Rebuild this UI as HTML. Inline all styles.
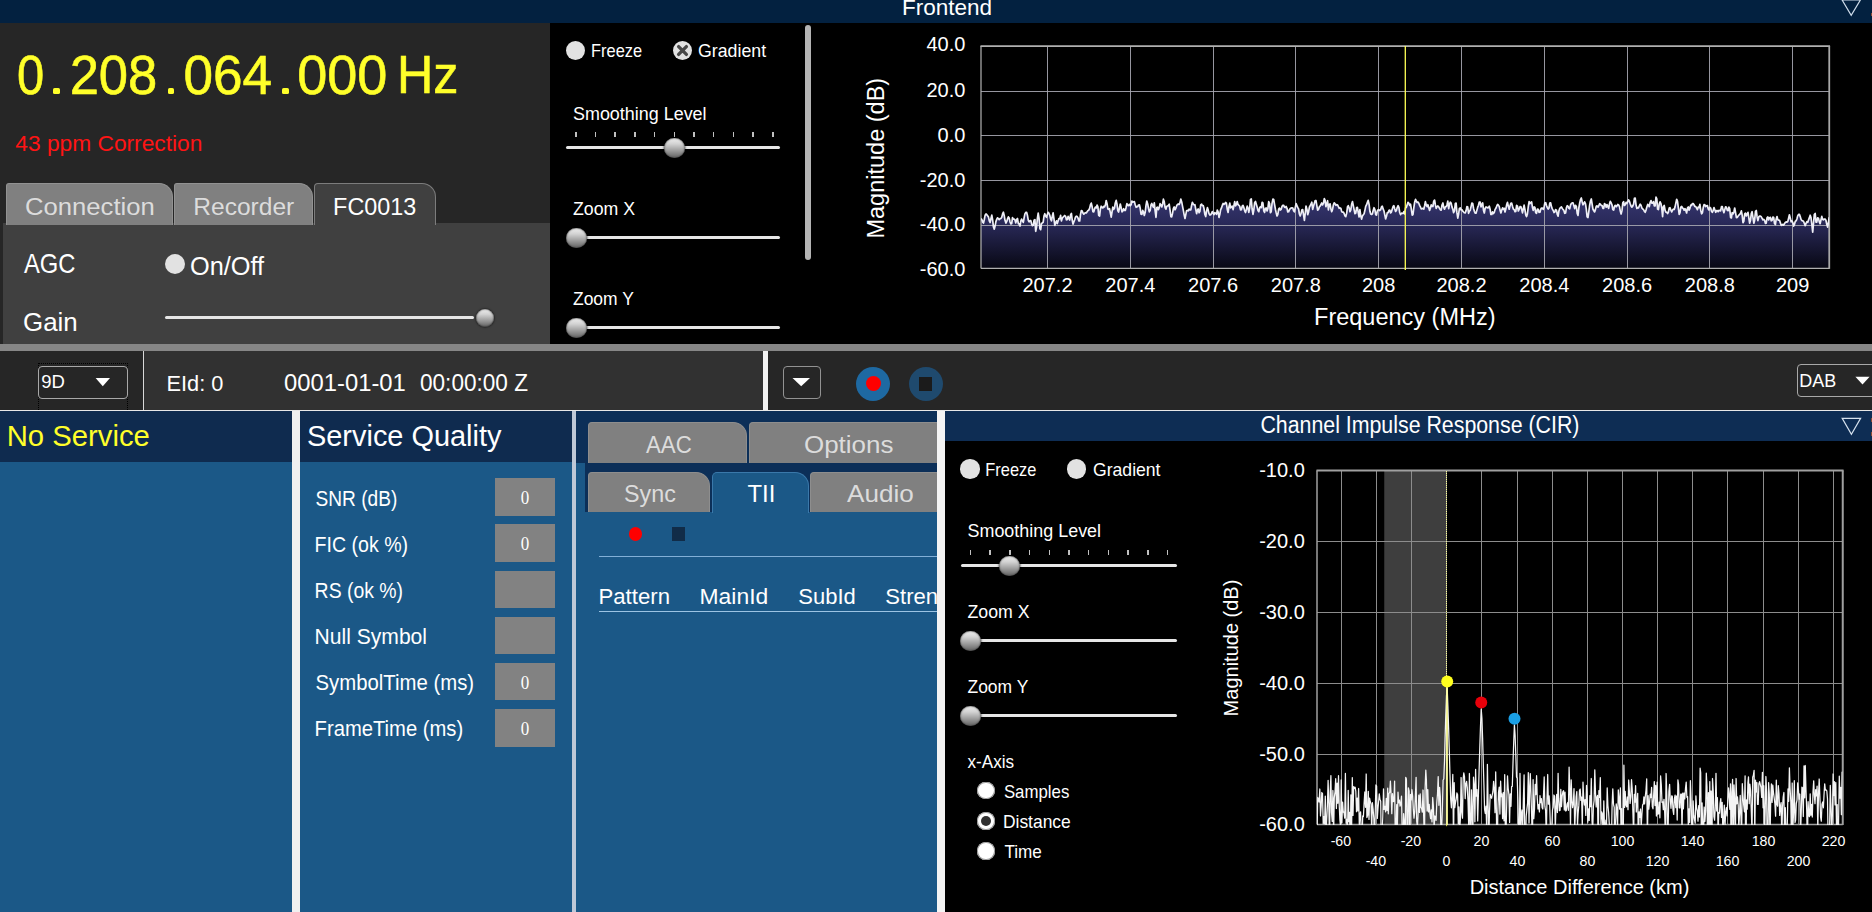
<!DOCTYPE html>
<html><head><meta charset="utf-8"><title>DAB</title>
<style>
html,body{margin:0;padding:0;background:#000;}
body{width:1872px;height:912px;position:relative;overflow:hidden;font-family:"Liberation Sans",sans-serif;}
.t{position:absolute;white-space:nowrap;line-height:1;transform-origin:0 0;font-family:"Liberation Sans",sans-serif;}
svg{display:block}
svg text{font-family:"Liberation Sans",sans-serif;fill:#fff}
</style></head><body>
<div style="position:absolute;left:0px;top:0px;width:1872px;height:23px;background:#032140;"></div>
<div style="position:absolute;left:0px;top:23px;width:550px;height:321px;background:#262626;"></div>
<div style="position:absolute;left:3px;top:222.5px;width:547px;height:121.5px;background:#404040;"></div>
<div style="position:absolute;left:6px;top:183px;width:166.5px;height:41.69999999999999px;background:#808080;border-radius:3px 14px 0 0;box-sizing:border-box;border:1px solid #929292;border-bottom:none"></div>
<div style="position:absolute;left:174px;top:183px;width:138.7px;height:41.69999999999999px;background:#808080;border-radius:3px 14px 0 0;box-sizing:border-box;border:1px solid #929292;border-bottom:none"></div>
<div style="position:absolute;left:314px;top:183px;width:121.5px;height:42px;background:#404040;border-radius:4px 14px 0 0;box-sizing:border-box;border:1px solid #7c7c7c;border-bottom:none"></div>
<div style="position:absolute;left:165.0px;top:254.0px;width:20px;height:20px;border-radius:50%;background:#e2e2e2;"></div>
<div style="position:absolute;left:165px;top:316.0px;width:309.2px;height:3px;background:#e6e6e6;border-radius:1.5px"></div>
<div style="position:absolute;left:475.6px;top:308.8px;width:18px;height:18px;border-radius:50%;background:linear-gradient(180deg,#f0f0f0 0%,#d2d2d2 30%,#929292 70%,#626262 100%);box-shadow:0 0 1.5px 1px rgba(0,0,0,0.35), inset 0 0 1.5px 0.5px rgba(40,40,40,0.7)"></div>
<div style="position:absolute;left:566.0px;top:40.5px;width:19px;height:19px;border-radius:50%;background:#e2e2e2;"></div>
<div style="position:absolute;left:672.5px;top:40.5px;width:19px;height:19px;border-radius:50%;background:#e2e2e2;"></div>
<svg style="position:absolute;left:672.5px;top:40.5px" width="19" height="19" viewBox="0 0 19 19"><path d="M5.6 5.6 L13.4 13.4 M13.4 5.6 L5.6 13.4" stroke="#484848" stroke-width="3.3" stroke-linecap="round"/></svg>
<div style="position:absolute;left:566px;top:146.0px;width:213.5px;height:3px;background:#e6e6e6;border-radius:1.5px"></div>
<div style="position:absolute;left:575.0px;top:132px;width:1.5px;height:5px;background:#c0c0c0;"></div>
<div style="position:absolute;left:594.7px;top:132px;width:1.5px;height:5px;background:#c0c0c0;"></div>
<div style="position:absolute;left:614.4px;top:132px;width:1.5px;height:5px;background:#c0c0c0;"></div>
<div style="position:absolute;left:634.1px;top:132px;width:1.5px;height:5px;background:#c0c0c0;"></div>
<div style="position:absolute;left:653.8px;top:132px;width:1.5px;height:5px;background:#c0c0c0;"></div>
<div style="position:absolute;left:673.5px;top:132px;width:1.5px;height:5px;background:#c0c0c0;"></div>
<div style="position:absolute;left:693.2px;top:132px;width:1.5px;height:5px;background:#c0c0c0;"></div>
<div style="position:absolute;left:712.9px;top:132px;width:1.5px;height:5px;background:#c0c0c0;"></div>
<div style="position:absolute;left:732.6px;top:132px;width:1.5px;height:5px;background:#c0c0c0;"></div>
<div style="position:absolute;left:752.3px;top:132px;width:1.5px;height:5px;background:#c0c0c0;"></div>
<div style="position:absolute;left:772.0px;top:132px;width:1.5px;height:5px;background:#c0c0c0;"></div>
<div style="position:absolute;left:664.3px;top:137.60000000000002px;width:20.4px;height:20.4px;border-radius:50%;background:linear-gradient(180deg,#f0f0f0 0%,#d2d2d2 30%,#929292 70%,#626262 100%);box-shadow:0 0 1.5px 1px rgba(0,0,0,0.35), inset 0 0 1.5px 0.5px rgba(40,40,40,0.7)"></div>
<div style="position:absolute;left:576.5px;top:236.0px;width:203.0px;height:3px;background:#e6e6e6;border-radius:1.5px"></div>
<div style="position:absolute;left:566.3px;top:227.60000000000002px;width:20.4px;height:20.4px;border-radius:50%;background:linear-gradient(180deg,#f0f0f0 0%,#d2d2d2 30%,#929292 70%,#626262 100%);box-shadow:0 0 1.5px 1px rgba(0,0,0,0.35), inset 0 0 1.5px 0.5px rgba(40,40,40,0.7)"></div>
<div style="position:absolute;left:576.5px;top:326.0px;width:203.0px;height:3px;background:#e6e6e6;border-radius:1.5px"></div>
<div style="position:absolute;left:566.3px;top:317.6px;width:20.4px;height:20.4px;border-radius:50%;background:linear-gradient(180deg,#f0f0f0 0%,#d2d2d2 30%,#929292 70%,#626262 100%);box-shadow:0 0 1.5px 1px rgba(0,0,0,0.35), inset 0 0 1.5px 0.5px rgba(40,40,40,0.7)"></div>
<div style="position:absolute;left:804.5px;top:25px;width:6.5px;height:235px;background:#b4b4b4;border-radius:3.5px"></div>
<div style="position:absolute;left:0px;top:343.8px;width:1872px;height:7.4px;background:#868686;"></div>
<div style="position:absolute;left:0px;top:351px;width:1872px;height:59px;background:#262626;"></div>
<div style="position:absolute;left:144px;top:351px;width:619px;height:59px;background:#313131;"></div>
<div style="position:absolute;left:143px;top:351px;width:1px;height:59px;background:#d8d8d8;"></div>
<div style="position:absolute;left:763px;top:351px;width:5px;height:59px;background:#f2f2f2;"></div>
<div style="position:absolute;left:0px;top:410px;width:1872px;height:1px;background:#e8e8e8;"></div>
<div style="position:absolute;left:38px;top:362.5px;width:90px;height:47.5px;box-sizing:border-box;border:1px dotted #000;border-bottom:none"></div>
<div style="position:absolute;left:38px;top:366px;width:90px;height:33px;box-sizing:border-box;border:1px solid #a8a8a8;border-radius:4px"></div>
<svg style="position:absolute;left:95px;top:377px" width="16" height="10"><path d="M0.6 1 L15 1 L7.8 9.3 Z" fill="#fff"/></svg>
<div style="position:absolute;left:783px;top:366px;width:38px;height:33px;box-sizing:border-box;border:1px solid #929292;border-radius:4px"></div>
<svg style="position:absolute;left:792px;top:377px" width="19" height="10"><path d="M0.5 1 L18 1 L9.2 9.3 Z" fill="#fff"/></svg>
<div style="position:absolute;left:856.0px;top:366.75px;width:34px;height:34px;border-radius:50%;background:#1e69a2;"></div>
<div style="position:absolute;left:865.5px;top:376.25px;width:15px;height:15px;border-radius:50%;background:#ff0000;"></div>
<div style="position:absolute;left:908.5px;top:366.75px;width:34px;height:34px;border-radius:50%;background:#1f4a6e;"></div>
<div style="position:absolute;left:919px;top:376.5px;width:13px;height:14px;background:#1b1b1b;"></div>
<div style="position:absolute;left:1797px;top:364px;width:90px;height:33px;box-sizing:border-box;border:1px solid #a8a8a8;border-radius:4px"></div>
<svg style="position:absolute;left:1854.5px;top:375.5px" width="16" height="10"><path d="M0.4 0.8 L14.6 0.8 L7.5 8.6 Z" fill="#fff"/></svg>
<div style="position:absolute;left:0px;top:411px;width:292px;height:501px;background:#1b5887;"></div>
<div style="position:absolute;left:0px;top:411px;width:292px;height:51px;background:#0f2b4f;"></div>
<div style="position:absolute;left:292px;top:411px;width:8px;height:501px;background:#f0f0f0;"></div>
<div style="position:absolute;left:300px;top:411px;width:272px;height:501px;background:#1b5887;"></div>
<div style="position:absolute;left:300px;top:411px;width:272px;height:51px;background:#0f2b4f;"></div>
<div style="position:absolute;left:572px;top:411px;width:4.2px;height:501px;background:#bec8d7;"></div>
<div style="position:absolute;left:576px;top:411px;width:361px;height:501px;background:#1b5887;"></div>
<div style="position:absolute;left:576px;top:411px;width:361px;height:52px;background:#0c2f58;"></div>
<div style="position:absolute;left:585px;top:463px;width:352px;height:49px;background:#0c2f58;"></div>
<div style="position:absolute;left:937px;top:411px;width:8px;height:501px;background:#f4f4f4;"></div>
<div style="position:absolute;left:945px;top:411px;width:927px;height:30.2px;background:#0e2d54;"></div>
<div style="position:absolute;left:495.4px;top:478.1px;width:59.6px;height:37.5px;background:#828282;"></div>
<div style="position:absolute;left:495.4px;top:524.3000000000001px;width:59.6px;height:37.5px;background:#828282;"></div>
<div style="position:absolute;left:495.4px;top:570.5px;width:59.6px;height:37.5px;background:#828282;"></div>
<div style="position:absolute;left:495.4px;top:616.7px;width:59.6px;height:37.5px;background:#828282;"></div>
<div style="position:absolute;left:495.4px;top:662.9000000000001px;width:59.6px;height:37.5px;background:#828282;"></div>
<div style="position:absolute;left:495.4px;top:709.1px;width:59.6px;height:37.5px;background:#828282;"></div>
<div style="position:absolute;left:0;top:0;width:937px;height:912px;overflow:hidden">
<div style="position:absolute;left:588px;top:422px;width:159px;height:41px;background:#808080;border-radius:4px 14px 0 0;box-sizing:border-box;border:1px solid #8e8e8e;border-bottom:none"></div>
<div style="position:absolute;left:748.5px;top:422px;width:211.5px;height:41px;background:#808080;border-radius:4px 14px 0 0;box-sizing:border-box;border:1px solid #8e8e8e;border-bottom:none"></div>
<div style="position:absolute;left:588px;top:471.5px;width:122px;height:40.5px;background:#808080;border-radius:4px 14px 0 0;box-sizing:border-box;border:1px solid #8e8e8e;border-bottom:none"></div>
<div style="position:absolute;left:711.5px;top:471.5px;width:97.5px;height:41.5px;background:#1b5887;border-radius:5px 14px 0 0;box-sizing:border-box;border:1px solid #3a78aa;border-bottom:none"></div>
<div style="position:absolute;left:810px;top:471.5px;width:150px;height:40.5px;background:#808080;border-radius:4px 14px 0 0;box-sizing:border-box;border:1px solid #8e8e8e;border-bottom:none"></div>
</div>
<div style="position:absolute;left:628.5px;top:527.3000000000001px;width:13.6px;height:13.6px;border-radius:50%;background:#ff0000;"></div>
<div style="position:absolute;left:672px;top:527.2px;width:13.2px;height:13.7px;background:#112c48;"></div>
<div style="position:absolute;left:598.5px;top:556px;width:338.5px;height:1.3px;background:#82afd7;"></div>
<div style="position:absolute;left:598.5px;top:610.5px;width:338.5px;height:1px;background:#9cc4e4;"></div>
<div style="position:absolute;left:960.25px;top:459.0px;width:19.5px;height:19.5px;border-radius:50%;background:#e2e2e2;"></div>
<div style="position:absolute;left:1066.5px;top:459.0px;width:19.5px;height:19.5px;border-radius:50%;background:#e2e2e2;"></div>
<div style="position:absolute;left:960.5px;top:564.0px;width:216.5px;height:3px;background:#e6e6e6;border-radius:1.5px"></div>
<div style="position:absolute;left:969.75px;top:550px;width:1.5px;height:5px;background:#c0c0c0;"></div>
<div style="position:absolute;left:989.45px;top:550px;width:1.5px;height:5px;background:#c0c0c0;"></div>
<div style="position:absolute;left:1009.15px;top:550px;width:1.5px;height:5px;background:#c0c0c0;"></div>
<div style="position:absolute;left:1028.85px;top:550px;width:1.5px;height:5px;background:#c0c0c0;"></div>
<div style="position:absolute;left:1048.55px;top:550px;width:1.5px;height:5px;background:#c0c0c0;"></div>
<div style="position:absolute;left:1068.25px;top:550px;width:1.5px;height:5px;background:#c0c0c0;"></div>
<div style="position:absolute;left:1087.95px;top:550px;width:1.5px;height:5px;background:#c0c0c0;"></div>
<div style="position:absolute;left:1107.65px;top:550px;width:1.5px;height:5px;background:#c0c0c0;"></div>
<div style="position:absolute;left:1127.35px;top:550px;width:1.5px;height:5px;background:#c0c0c0;"></div>
<div style="position:absolute;left:1147.05px;top:550px;width:1.5px;height:5px;background:#c0c0c0;"></div>
<div style="position:absolute;left:1166.75px;top:550px;width:1.5px;height:5px;background:#c0c0c0;"></div>
<div style="position:absolute;left:999.3px;top:555.5999999999999px;width:20.4px;height:20.4px;border-radius:50%;background:linear-gradient(180deg,#f0f0f0 0%,#d2d2d2 30%,#929292 70%,#626262 100%);box-shadow:0 0 1.5px 1px rgba(0,0,0,0.35), inset 0 0 1.5px 0.5px rgba(40,40,40,0.7)"></div>
<div style="position:absolute;left:970.5px;top:639.0px;width:206.5px;height:3px;background:#e6e6e6;border-radius:1.5px"></div>
<div style="position:absolute;left:960.3px;top:630.5999999999999px;width:20.4px;height:20.4px;border-radius:50%;background:linear-gradient(180deg,#f0f0f0 0%,#d2d2d2 30%,#929292 70%,#626262 100%);box-shadow:0 0 1.5px 1px rgba(0,0,0,0.35), inset 0 0 1.5px 0.5px rgba(40,40,40,0.7)"></div>
<div style="position:absolute;left:970.5px;top:714.0px;width:206.5px;height:3px;background:#e6e6e6;border-radius:1.5px"></div>
<div style="position:absolute;left:960.3px;top:705.5999999999999px;width:20.4px;height:20.4px;border-radius:50%;background:linear-gradient(180deg,#f0f0f0 0%,#d2d2d2 30%,#929292 70%,#626262 100%);box-shadow:0 0 1.5px 1px rgba(0,0,0,0.35), inset 0 0 1.5px 0.5px rgba(40,40,40,0.7)"></div>
<div style="position:absolute;left:977.4px;top:782.0999999999999px;width:17.4px;height:17.4px;border-radius:50%;background:#ffffff;box-shadow:inset 0 0 0 1px #9a9a9a"></div>
<div style="position:absolute;left:977.4px;top:812.1999999999999px;width:17.4px;height:17.4px;border-radius:50%;background:#ffffff;box-shadow:inset 0 0 0 1px #9a9a9a"></div>
<div style="position:absolute;left:977.4px;top:842.3px;width:17.4px;height:17.4px;border-radius:50%;background:#ffffff;box-shadow:inset 0 0 0 1px #9a9a9a"></div>
<div style="position:absolute;left:981.1px;top:815.9px;width:10px;height:10px;border-radius:50%;background:#303030;"></div>
<svg style="position:absolute;left:1838px;top:0px" width="30" height="20"><path d="M4 -0.2 L22.5 -0.2 L13.2 15.4 Z" fill="none" stroke="#cfdcea" stroke-width="1.2"/></svg>
<svg style="position:absolute;left:1838px;top:414px" width="30" height="24"><path d="M4.2 4.3 L22.6 4.3 L13.4 20.2 Z" fill="none" stroke="#d6e2ee" stroke-width="1.2"/></svg>
<div style="position:absolute;left:1870.5px;top:12.5px;width:1.5px;height:3.5px;background:#8a4a34;"></div>
<div style="position:absolute;left:1870.5px;top:418px;width:1.5px;height:3.5px;background:#8a4a34;"></div>
<div style="position:absolute;left:1870.5px;top:432px;width:1.5px;height:3.5px;background:#8a4a34;"></div>
<div style="position:absolute;left:53.1px;top:87.5px;width:6.8px;height:6.8px;background:#ffff2a;border-radius:1.6px"></div>
<div style="position:absolute;left:167.7px;top:87.5px;width:6.8px;height:6.8px;background:#ffff2a;border-radius:1.6px"></div>
<div style="position:absolute;left:281.8px;top:87.5px;width:6.8px;height:6.8px;background:#ffff2a;border-radius:1.6px"></div>
<svg style="position:absolute;left:0;top:0" width="1872" height="912" viewBox="0 0 1872 912">
<defs><linearGradient id="g1" x1="0" y1="0" x2="0" y2="1" gradientUnits="objectBoundingBox"><stop offset="0" stop-color="#36366f"/><stop offset="0.35" stop-color="#2a2a5a"/><stop offset="1" stop-color="#080814"/></linearGradient><clipPath id="c1"><rect x="981" y="46" width="848" height="222.5"/></clipPath><clipPath id="c2"><rect x="1317" y="470.5" width="525.5" height="354.5"/></clipPath></defs>
<path d="M981.0 218.4 L981.8 219.5 L982.7 222.1 L983.5 223.0 L984.3 219.5 L985.1 215.3 L986.0 214.0 L986.8 214.7 L987.6 215.8 L988.5 217.1 L989.3 220.8 L990.1 222.5 L991.0 218.5 L991.8 215.1 L992.6 219.6 L993.4 226.6 L994.3 229.1 L995.1 225.8 L995.9 221.6 L996.8 219.1 L997.6 217.8 L998.4 218.7 L999.2 219.7 L1000.1 218.6 L1000.9 218.5 L1001.7 217.5 L1002.6 213.9 L1003.4 212.2 L1004.2 215.5 L1005.0 220.3 L1005.9 223.1 L1006.7 221.7 L1007.5 218.9 L1008.4 216.9 L1009.2 218.0 L1010.0 221.8 L1010.9 223.8 L1011.7 223.7 L1012.5 217.6 L1013.3 219.1 L1014.2 219.0 L1015.0 220.0 L1015.8 222.9 L1016.7 219.3 L1017.5 218.5 L1018.3 223.7 L1019.1 223.9 L1020.0 226.0 L1020.8 221.0 L1021.6 219.1 L1022.5 221.0 L1023.3 222.4 L1024.1 217.9 L1024.9 213.9 L1025.8 212.4 L1026.6 212.3 L1027.4 215.2 L1028.3 220.4 L1029.1 221.9 L1029.9 220.6 L1030.8 220.7 L1031.6 223.8 L1032.4 225.6 L1033.2 225.3 L1034.1 220.2 L1034.9 219.6 L1035.7 231.3 L1036.6 226.8 L1037.4 218.4 L1038.2 213.2 L1039.0 218.1 L1039.9 228.5 L1040.7 229.7 L1041.5 223.7 L1042.4 222.8 L1043.2 222.2 L1044.0 216.1 L1044.8 213.7 L1045.7 216.3 L1046.5 217.3 L1047.3 214.5 L1048.2 212.3 L1049.0 213.5 L1049.8 215.4 L1050.7 219.2 L1051.5 220.8 L1052.3 216.2 L1053.1 212.9 L1054.0 219.2 L1054.8 225.5 L1055.6 223.1 L1056.5 220.8 L1057.3 223.6 L1058.1 221.1 L1058.9 218.5 L1059.8 218.6 L1060.6 215.4 L1061.4 221.0 L1062.3 218.0 L1063.1 217.2 L1063.9 216.3 L1064.7 215.5 L1065.6 216.4 L1066.4 219.8 L1067.2 219.6 L1068.1 216.4 L1068.9 218.6 L1069.7 220.0 L1070.6 214.9 L1071.4 213.4 L1072.2 220.0 L1073.0 224.1 L1073.9 221.8 L1074.7 219.8 L1075.5 217.1 L1076.4 216.2 L1077.2 216.6 L1078.0 218.0 L1078.8 220.8 L1079.7 221.0 L1080.5 214.5 L1081.3 210.6 L1082.2 211.1 L1083.0 213.1 L1083.8 214.2 L1084.6 213.2 L1085.5 212.7 L1086.3 213.0 L1087.1 211.8 L1088.0 210.6 L1088.8 210.0 L1089.6 208.4 L1090.5 204.7 L1091.3 203.1 L1092.1 206.7 L1092.9 211.6 L1093.8 211.8 L1094.6 208.7 L1095.4 207.1 L1096.3 207.9 L1097.1 205.1 L1097.9 206.9 L1098.7 215.4 L1099.6 216.1 L1100.4 208.9 L1101.2 206.2 L1102.1 207.5 L1102.9 207.9 L1103.7 206.3 L1104.5 206.9 L1105.4 204.8 L1106.2 200.5 L1107.0 203.4 L1107.9 209.0 L1108.7 209.4 L1109.5 208.6 L1110.4 213.0 L1111.2 217.1 L1112.0 212.1 L1112.8 207.2 L1113.7 209.4 L1114.5 208.0 L1115.3 203.0 L1116.2 200.4 L1117.0 204.2 L1117.8 210.6 L1118.6 212.0 L1119.5 207.9 L1120.3 204.0 L1121.1 207.5 L1122.0 211.8 L1122.8 211.1 L1123.6 208.7 L1124.4 210.3 L1125.3 210.5 L1126.1 207.3 L1126.9 203.6 L1127.8 205.4 L1128.6 205.6 L1129.4 204.3 L1130.3 205.8 L1131.1 204.8 L1131.9 201.0 L1132.7 202.1 L1133.6 201.8 L1134.4 201.6 L1135.2 204.8 L1136.1 207.3 L1136.9 206.7 L1137.7 206.6 L1138.5 205.0 L1139.4 204.8 L1140.2 208.2 L1141.0 214.2 L1141.9 214.3 L1142.7 210.4 L1143.5 211.8 L1144.3 215.5 L1145.2 212.3 L1146.0 205.4 L1146.8 201.0 L1147.7 203.9 L1148.5 208.5 L1149.3 211.9 L1150.2 210.4 L1151.0 205.0 L1151.8 203.5 L1152.6 205.5 L1153.5 207.3 L1154.3 202.8 L1155.1 210.6 L1156.0 217.3 L1156.8 207.6 L1157.6 207.2 L1158.4 209.7 L1159.3 207.4 L1160.1 203.7 L1160.9 204.7 L1161.8 206.9 L1162.6 204.0 L1163.4 199.2 L1164.2 201.5 L1165.1 207.7 L1165.9 209.2 L1166.7 206.3 L1167.6 206.0 L1168.4 205.3 L1169.2 204.2 L1170.1 210.7 L1170.9 216.7 L1171.7 216.9 L1172.5 213.4 L1173.4 208.5 L1174.2 207.0 L1175.0 209.8 L1175.9 208.0 L1176.7 205.7 L1177.5 204.3 L1178.3 204.2 L1179.2 204.4 L1180.0 202.6 L1180.8 199.1 L1181.7 201.9 L1182.5 206.1 L1183.3 210.1 L1184.1 214.6 L1185.0 218.5 L1185.8 214.6 L1186.6 210.7 L1187.5 210.4 L1188.3 210.9 L1189.1 209.1 L1190.0 209.9 L1190.8 209.9 L1191.6 205.5 L1192.4 202.3 L1193.3 204.2 L1194.1 204.9 L1194.9 204.7 L1195.8 209.5 L1196.6 213.7 L1197.4 210.5 L1198.2 208.9 L1199.1 212.7 L1199.9 211.4 L1200.7 204.9 L1201.6 204.1 L1202.4 205.6 L1203.2 205.6 L1204.0 208.5 L1204.9 214.5 L1205.7 216.5 L1206.5 211.5 L1207.4 207.6 L1208.2 210.1 L1209.0 213.6 L1209.9 215.1 L1210.7 214.7 L1211.5 213.5 L1212.3 211.6 L1213.2 213.5 L1214.0 214.6 L1214.8 212.6 L1215.7 213.2 L1216.5 214.3 L1217.3 210.0 L1218.1 211.9 L1219.0 217.4 L1219.8 214.5 L1220.6 209.8 L1221.5 207.9 L1222.3 205.4 L1223.1 203.5 L1223.9 204.4 L1224.8 203.8 L1225.6 202.5 L1226.4 203.2 L1227.3 209.5 L1228.1 212.5 L1228.9 206.9 L1229.8 203.2 L1230.6 207.8 L1231.4 207.0 L1232.2 206.2 L1233.1 209.6 L1233.9 205.8 L1234.7 201.6 L1235.6 205.8 L1236.4 204.5 L1237.2 201.5 L1238.0 204.5 L1238.9 205.3 L1239.7 206.2 L1240.5 209.8 L1241.4 209.7 L1242.2 206.2 L1243.0 205.4 L1243.8 207.4 L1244.7 210.8 L1245.5 212.5 L1246.3 209.7 L1247.2 206.1 L1248.0 208.0 L1248.8 212.4 L1249.7 207.8 L1250.5 199.5 L1251.3 199.0 L1252.1 209.0 L1253.0 214.3 L1253.8 210.2 L1254.6 202.8 L1255.5 201.5 L1256.3 204.2 L1257.1 206.9 L1257.9 210.3 L1258.8 211.7 L1259.6 208.0 L1260.4 206.8 L1261.3 207.7 L1262.1 202.3 L1262.9 202.9 L1263.8 210.8 L1264.6 212.4 L1265.4 208.3 L1266.2 208.0 L1267.1 211.0 L1267.9 208.4 L1268.7 201.6 L1269.6 203.5 L1270.4 212.7 L1271.2 211.7 L1272.0 203.7 L1272.9 199.1 L1273.7 199.5 L1274.5 204.2 L1275.4 209.2 L1276.2 212.9 L1277.0 216.0 L1277.8 214.6 L1278.7 209.0 L1279.5 208.1 L1280.3 210.0 L1281.2 209.3 L1282.0 206.5 L1282.8 205.3 L1283.7 205.4 L1284.5 207.2 L1285.3 207.6 L1286.1 206.4 L1287.0 208.3 L1287.8 212.0 L1288.6 211.8 L1289.5 209.7 L1290.3 208.5 L1291.1 208.1 L1291.9 207.8 L1292.8 208.1 L1293.6 210.7 L1294.4 211.8 L1295.3 207.4 L1296.1 203.6 L1296.9 205.5 L1297.7 207.4 L1298.6 209.0 L1299.4 214.0 L1300.2 215.9 L1301.1 213.2 L1301.9 209.9 L1302.7 209.6 L1303.6 215.1 L1304.4 220.4 L1305.2 213.5 L1306.0 206.0 L1306.9 209.2 L1307.7 214.7 L1308.5 212.3 L1309.4 207.2 L1310.2 205.6 L1311.0 204.3 L1311.8 202.2 L1312.7 209.4 L1313.5 206.2 L1314.3 203.6 L1315.2 200.5 L1316.0 200.6 L1316.8 205.4 L1317.6 210.2 L1318.5 209.5 L1319.3 206.9 L1320.1 206.2 L1321.0 204.5 L1321.8 203.0 L1322.6 204.9 L1323.5 203.0 L1324.3 198.6 L1325.1 200.4 L1325.9 206.7 L1326.8 203.9 L1327.6 200.7 L1328.4 209.9 L1329.3 204.5 L1330.1 203.8 L1330.9 208.7 L1331.7 211.7 L1332.6 209.2 L1333.4 204.9 L1334.2 202.8 L1335.1 203.9 L1335.9 205.4 L1336.7 204.7 L1337.5 204.8 L1338.4 206.7 L1339.2 208.3 L1340.0 207.8 L1340.9 208.5 L1341.7 211.6 L1342.5 212.2 L1343.4 212.1 L1344.2 213.7 L1345.0 215.9 L1345.8 216.6 L1346.7 213.1 L1347.5 206.8 L1348.3 205.7 L1349.2 208.0 L1350.0 211.7 L1350.8 210.0 L1351.6 204.3 L1352.5 201.6 L1353.3 205.6 L1354.1 209.6 L1355.0 213.7 L1355.8 213.0 L1356.6 207.5 L1357.4 207.4 L1358.3 212.8 L1359.1 217.0 L1359.9 209.6 L1360.8 216.0 L1361.6 219.1 L1362.4 216.0 L1363.3 214.7 L1364.1 213.8 L1364.9 210.3 L1365.7 206.4 L1366.6 204.7 L1367.4 202.4 L1368.2 200.4 L1369.1 204.4 L1369.9 211.3 L1370.7 214.1 L1371.5 214.5 L1372.4 213.8 L1373.2 210.5 L1374.0 207.7 L1374.9 209.6 L1375.7 214.7 L1376.5 215.1 L1377.3 211.0 L1378.2 209.6 L1379.0 209.8 L1379.8 210.5 L1380.7 209.6 L1381.5 206.9 L1382.3 206.2 L1383.2 209.2 L1384.0 211.0 L1384.8 214.9 L1385.6 218.9 L1386.5 216.2 L1387.3 212.6 L1388.1 212.7 L1389.0 210.2 L1389.8 210.0 L1390.6 212.9 L1391.4 212.1 L1392.3 209.0 L1393.1 206.4 L1393.9 205.7 L1394.8 208.9 L1395.6 211.4 L1396.4 210.5 L1397.2 207.6 L1398.1 205.7 L1398.9 207.4 L1399.7 212.5 L1400.6 214.6 L1401.4 213.2 L1402.2 213.3 L1403.1 213.4 L1403.9 211.6 L1404.7 213.9 L1405.5 208.0 L1406.4 207.3 L1407.2 204.7 L1408.0 202.4 L1408.9 203.4 L1409.7 205.3 L1410.5 204.1 L1411.3 208.9 L1412.2 215.2 L1413.0 214.5 L1413.8 207.9 L1414.7 202.0 L1415.5 199.4 L1416.3 201.0 L1417.1 202.5 L1418.0 202.1 L1418.8 203.2 L1419.6 205.4 L1420.5 207.1 L1421.3 209.0 L1422.1 208.8 L1423.0 208.4 L1423.8 209.1 L1424.6 205.7 L1425.4 201.7 L1426.3 205.3 L1427.1 206.7 L1427.9 204.7 L1428.8 207.7 L1429.6 210.4 L1430.4 208.0 L1431.2 204.9 L1432.1 206.5 L1432.9 206.5 L1433.7 201.3 L1434.6 200.1 L1435.4 204.9 L1436.2 208.3 L1437.0 206.8 L1437.9 206.0 L1438.7 206.9 L1439.5 208.4 L1440.4 209.9 L1441.2 210.1 L1442.0 205.0 L1442.9 203.0 L1443.7 207.3 L1444.5 209.1 L1445.3 207.1 L1446.2 206.6 L1447.0 204.8 L1447.8 201.1 L1448.7 208.7 L1449.5 204.0 L1450.3 202.2 L1451.1 203.0 L1452.0 207.1 L1452.8 209.1 L1453.6 212.7 L1454.5 210.8 L1455.3 203.5 L1456.1 203.1 L1456.9 212.4 L1457.8 218.1 L1458.6 214.0 L1459.4 208.4 L1460.3 207.9 L1461.1 209.9 L1461.9 209.7 L1462.8 211.2 L1463.6 212.0 L1464.4 212.8 L1465.2 213.0 L1466.1 210.6 L1466.9 206.7 L1467.7 206.8 L1468.6 213.3 L1469.4 211.3 L1470.2 210.3 L1471.0 206.9 L1471.9 203.0 L1472.7 203.4 L1473.5 208.2 L1474.4 211.3 L1475.2 213.1 L1476.0 213.2 L1476.8 210.6 L1477.7 207.2 L1478.5 205.3 L1479.3 202.0 L1480.2 202.1 L1481.0 206.9 L1481.8 204.7 L1482.7 202.9 L1483.5 210.2 L1484.3 213.0 L1485.1 208.5 L1486.0 206.9 L1486.8 207.3 L1487.6 207.8 L1488.5 207.6 L1489.3 206.2 L1490.1 209.2 L1490.9 214.5 L1491.8 214.5 L1492.6 211.8 L1493.4 213.5 L1494.3 212.4 L1495.1 209.4 L1495.9 208.2 L1496.7 206.2 L1497.6 204.4 L1498.4 205.2 L1499.2 206.4 L1500.1 210.3 L1500.9 213.0 L1501.7 210.2 L1502.6 207.9 L1503.4 209.4 L1504.2 208.3 L1505.0 212.0 L1505.9 208.7 L1506.7 204.6 L1507.5 202.4 L1508.4 206.6 L1509.2 209.2 L1510.0 205.9 L1510.8 203.3 L1511.7 203.1 L1512.5 206.2 L1513.3 209.0 L1514.2 209.7 L1515.0 211.6 L1515.8 211.4 L1516.6 205.4 L1517.5 206.1 L1518.3 211.0 L1519.1 209.4 L1520.0 206.7 L1520.8 206.6 L1521.6 209.1 L1522.5 212.8 L1523.3 209.0 L1524.1 205.1 L1524.9 209.3 L1525.8 215.0 L1526.6 216.6 L1527.4 214.0 L1528.3 206.5 L1529.1 201.7 L1529.9 203.6 L1530.7 202.9 L1531.6 201.8 L1532.4 207.2 L1533.2 210.4 L1534.1 206.9 L1534.9 207.5 L1535.7 212.6 L1536.5 213.3 L1537.4 209.0 L1538.2 209.3 L1539.0 212.3 L1539.9 212.2 L1540.7 209.5 L1541.5 208.0 L1542.4 208.0 L1543.2 209.4 L1544.0 207.7 L1544.8 203.1 L1545.7 202.7 L1546.5 205.5 L1547.3 207.6 L1548.2 209.0 L1549.0 208.0 L1549.8 203.1 L1550.6 202.8 L1551.5 206.9 L1552.3 208.8 L1553.1 210.3 L1554.0 212.5 L1554.8 212.0 L1555.6 209.6 L1556.5 210.2 L1557.3 214.5 L1558.1 216.2 L1558.9 211.0 L1559.8 208.2 L1560.6 207.8 L1561.4 206.8 L1562.3 208.4 L1563.1 209.6 L1563.9 210.4 L1564.7 213.3 L1565.6 212.9 L1566.4 207.8 L1567.2 205.7 L1568.1 206.4 L1568.9 208.4 L1569.7 208.9 L1570.5 205.2 L1571.4 203.4 L1572.2 202.9 L1573.0 202.8 L1573.9 205.7 L1574.7 208.6 L1575.5 205.4 L1576.4 206.5 L1577.2 213.5 L1578.0 215.4 L1578.8 208.1 L1579.7 203.0 L1580.5 199.7 L1581.3 198.0 L1582.2 201.9 L1583.0 204.8 L1583.8 203.6 L1584.6 201.8 L1585.5 203.9 L1586.3 209.1 L1587.1 216.9 L1588.0 217.5 L1588.8 211.6 L1589.6 205.5 L1590.4 201.4 L1591.3 199.0 L1592.1 204.0 L1592.9 209.0 L1593.8 210.8 L1594.6 211.9 L1595.4 209.6 L1596.3 206.2 L1597.1 205.8 L1597.9 207.2 L1598.7 205.9 L1599.6 203.7 L1600.4 204.2 L1601.2 205.4 L1602.1 205.5 L1602.9 208.3 L1603.7 208.3 L1604.5 203.6 L1605.4 204.6 L1606.2 207.2 L1607.0 204.6 L1607.9 206.6 L1608.7 208.3 L1609.5 203.9 L1610.3 201.3 L1611.2 203.0 L1612.0 204.8 L1612.8 209.5 L1613.7 210.1 L1614.5 206.3 L1615.3 205.3 L1616.2 206.8 L1617.0 205.9 L1617.8 204.5 L1618.6 205.0 L1619.5 206.6 L1620.3 211.1 L1621.1 214.0 L1622.0 210.4 L1622.8 202.8 L1623.6 201.7 L1624.4 205.5 L1625.3 204.7 L1626.1 202.3 L1626.9 203.4 L1627.8 201.7 L1628.6 199.8 L1629.4 201.2 L1630.2 203.7 L1631.1 206.1 L1631.9 207.1 L1632.7 206.1 L1633.6 204.2 L1634.4 198.4 L1635.2 198.1 L1636.1 205.3 L1636.9 208.5 L1637.7 207.7 L1638.5 207.9 L1639.4 205.7 L1640.2 204.2 L1641.0 205.3 L1641.9 208.0 L1642.7 209.0 L1643.5 209.5 L1644.3 211.2 L1645.2 212.3 L1646.0 210.1 L1646.8 207.2 L1647.7 204.4 L1648.5 205.4 L1649.3 206.7 L1650.1 202.7 L1651.0 200.6 L1651.8 203.1 L1652.6 203.2 L1653.5 201.6 L1654.3 205.9 L1655.1 205.8 L1656.0 197.2 L1656.8 198.9 L1657.6 209.1 L1658.4 209.6 L1659.3 203.8 L1660.1 201.8 L1660.9 203.5 L1661.8 208.4 L1662.6 216.6 L1663.4 206.6 L1664.2 205.4 L1665.1 210.3 L1665.9 212.1 L1666.7 212.3 L1667.6 213.6 L1668.4 212.0 L1669.2 208.1 L1670.0 207.7 L1670.9 210.1 L1671.7 211.9 L1672.5 210.1 L1673.4 209.2 L1674.2 209.4 L1675.0 207.1 L1675.9 202.9 L1676.7 199.3 L1677.5 201.3 L1678.3 207.6 L1679.2 214.5 L1680.0 212.6 L1680.8 207.2 L1681.7 206.5 L1682.5 208.0 L1683.3 208.4 L1684.1 210.2 L1685.0 208.7 L1685.8 210.2 L1686.6 213.0 L1687.5 208.0 L1688.3 206.9 L1689.1 210.2 L1689.9 208.3 L1690.8 205.0 L1691.6 205.3 L1692.4 203.5 L1693.3 203.6 L1694.1 205.0 L1694.9 206.5 L1695.8 206.7 L1696.6 208.1 L1697.4 209.7 L1698.2 207.1 L1699.1 207.5 L1699.9 204.3 L1700.7 210.2 L1701.6 213.8 L1702.4 212.7 L1703.2 207.8 L1704.0 204.7 L1704.9 204.9 L1705.7 206.5 L1706.5 205.8 L1707.4 205.5 L1708.2 208.9 L1709.0 210.0 L1709.8 207.3 L1710.7 208.1 L1711.5 211.2 L1712.3 212.3 L1713.2 210.3 L1714.0 207.6 L1714.8 209.7 L1715.7 212.3 L1716.5 210.5 L1717.3 210.6 L1718.1 211.7 L1719.0 210.3 L1719.8 210.7 L1720.6 210.8 L1721.5 206.6 L1722.3 206.7 L1723.1 210.2 L1723.9 212.7 L1724.8 209.4 L1725.6 206.8 L1726.4 207.2 L1727.3 210.3 L1728.1 210.7 L1728.9 207.1 L1729.7 208.6 L1730.6 217.5 L1731.4 217.9 L1732.2 212.5 L1733.1 213.9 L1733.9 212.0 L1734.7 208.0 L1735.6 212.8 L1736.4 217.6 L1737.2 217.5 L1738.0 216.3 L1738.9 215.1 L1739.7 214.4 L1740.5 213.4 L1741.4 210.8 L1742.2 215.3 L1743.0 222.7 L1743.8 221.4 L1744.7 213.9 L1745.5 213.1 L1746.3 216.0 L1747.2 214.2 L1748.0 212.3 L1748.8 217.7 L1749.6 223.2 L1750.5 220.3 L1751.3 213.5 L1752.1 211.7 L1753.0 217.6 L1753.8 223.2 L1754.6 220.4 L1755.5 211.3 L1756.3 210.5 L1757.1 216.9 L1757.9 220.6 L1758.8 216.9 L1759.6 216.0 L1760.4 216.0 L1761.3 216.9 L1762.1 218.3 L1762.9 219.9 L1763.7 219.4 L1764.6 220.3 L1765.4 223.4 L1766.2 223.1 L1767.1 217.7 L1767.9 217.0 L1768.7 219.9 L1769.5 217.7 L1770.4 217.4 L1771.2 220.8 L1772.0 220.5 L1772.9 217.0 L1773.7 217.5 L1774.5 223.4 L1775.4 224.6 L1776.2 218.9 L1777.0 216.5 L1777.8 219.7 L1778.7 220.2 L1779.5 220.3 L1780.3 222.6 L1781.2 225.3 L1782.0 225.2 L1782.8 224.3 L1783.6 225.1 L1784.5 223.7 L1785.3 222.4 L1786.1 221.9 L1787.0 222.1 L1787.8 221.5 L1788.6 218.3 L1789.4 214.8 L1790.3 218.2 L1791.1 221.8 L1791.9 220.8 L1792.8 222.4 L1793.6 226.1 L1794.4 224.5 L1795.3 221.2 L1796.1 220.8 L1796.9 219.0 L1797.7 215.9 L1798.6 214.3 L1799.4 214.4 L1800.2 216.6 L1801.1 219.4 L1801.9 220.5 L1802.7 220.9 L1803.5 221.2 L1804.4 223.5 L1805.2 225.6 L1806.0 223.4 L1806.9 221.7 L1807.7 222.4 L1808.5 220.1 L1809.3 217.9 L1810.2 215.2 L1811.0 217.6 L1811.8 224.0 L1812.7 232.1 L1813.5 223.5 L1814.3 214.6 L1815.2 213.5 L1816.0 222.1 L1816.8 222.2 L1817.6 217.8 L1818.5 218.2 L1819.3 221.9 L1820.1 223.7 L1821.0 219.7 L1821.8 216.4 L1822.6 219.4 L1823.4 219.8 L1824.3 219.0 L1825.1 219.1 L1825.9 220.2 L1826.8 224.3 L1827.6 227.1 L1828.4 222.8 L1829.2 217.2 L1829.2 268.4 L981 268.4 Z" fill="url(#g1)" clip-path="url(#c1)"/>
<path d="M1047.50 46 V268.4 M1130.50 46 V268.4 M1213.50 46 V268.4 M1295.50 46 V268.4 M1378.50 46 V268.4 M1461.50 46 V268.4 M1544.50 46 V268.4 M1627.50 46 V268.4 M1709.50 46 V268.4 M1792.50 46 V268.4 M981 91.50 H1829.25 M981 135.50 H1829.25 M981 180.50 H1829.25 M981 225.50 H1829.25" stroke="#a6a6b0" stroke-width="1" fill="none" opacity="0.9"/>
<path d="M981 268.4 V46" stroke="#b4b4b4" stroke-width="1.2" fill="none"/>
<path d="M980.5 46.1 H1830.05" stroke="#b0b0b0" stroke-width="1.7" fill="none"/>
<path d="M1829.25 46 V268.9" stroke="#a8a8a8" stroke-width="1.8" fill="none"/>
<path d="M981 268.4 H1829.25" stroke="#b0b0b0" stroke-width="1.2" fill="none"/>
<path d="M981.0 218.4 L981.8 219.5 L982.7 222.1 L983.5 223.0 L984.3 219.5 L985.1 215.3 L986.0 214.0 L986.8 214.7 L987.6 215.8 L988.5 217.1 L989.3 220.8 L990.1 222.5 L991.0 218.5 L991.8 215.1 L992.6 219.6 L993.4 226.6 L994.3 229.1 L995.1 225.8 L995.9 221.6 L996.8 219.1 L997.6 217.8 L998.4 218.7 L999.2 219.7 L1000.1 218.6 L1000.9 218.5 L1001.7 217.5 L1002.6 213.9 L1003.4 212.2 L1004.2 215.5 L1005.0 220.3 L1005.9 223.1 L1006.7 221.7 L1007.5 218.9 L1008.4 216.9 L1009.2 218.0 L1010.0 221.8 L1010.9 223.8 L1011.7 223.7 L1012.5 217.6 L1013.3 219.1 L1014.2 219.0 L1015.0 220.0 L1015.8 222.9 L1016.7 219.3 L1017.5 218.5 L1018.3 223.7 L1019.1 223.9 L1020.0 226.0 L1020.8 221.0 L1021.6 219.1 L1022.5 221.0 L1023.3 222.4 L1024.1 217.9 L1024.9 213.9 L1025.8 212.4 L1026.6 212.3 L1027.4 215.2 L1028.3 220.4 L1029.1 221.9 L1029.9 220.6 L1030.8 220.7 L1031.6 223.8 L1032.4 225.6 L1033.2 225.3 L1034.1 220.2 L1034.9 219.6 L1035.7 231.3 L1036.6 226.8 L1037.4 218.4 L1038.2 213.2 L1039.0 218.1 L1039.9 228.5 L1040.7 229.7 L1041.5 223.7 L1042.4 222.8 L1043.2 222.2 L1044.0 216.1 L1044.8 213.7 L1045.7 216.3 L1046.5 217.3 L1047.3 214.5 L1048.2 212.3 L1049.0 213.5 L1049.8 215.4 L1050.7 219.2 L1051.5 220.8 L1052.3 216.2 L1053.1 212.9 L1054.0 219.2 L1054.8 225.5 L1055.6 223.1 L1056.5 220.8 L1057.3 223.6 L1058.1 221.1 L1058.9 218.5 L1059.8 218.6 L1060.6 215.4 L1061.4 221.0 L1062.3 218.0 L1063.1 217.2 L1063.9 216.3 L1064.7 215.5 L1065.6 216.4 L1066.4 219.8 L1067.2 219.6 L1068.1 216.4 L1068.9 218.6 L1069.7 220.0 L1070.6 214.9 L1071.4 213.4 L1072.2 220.0 L1073.0 224.1 L1073.9 221.8 L1074.7 219.8 L1075.5 217.1 L1076.4 216.2 L1077.2 216.6 L1078.0 218.0 L1078.8 220.8 L1079.7 221.0 L1080.5 214.5 L1081.3 210.6 L1082.2 211.1 L1083.0 213.1 L1083.8 214.2 L1084.6 213.2 L1085.5 212.7 L1086.3 213.0 L1087.1 211.8 L1088.0 210.6 L1088.8 210.0 L1089.6 208.4 L1090.5 204.7 L1091.3 203.1 L1092.1 206.7 L1092.9 211.6 L1093.8 211.8 L1094.6 208.7 L1095.4 207.1 L1096.3 207.9 L1097.1 205.1 L1097.9 206.9 L1098.7 215.4 L1099.6 216.1 L1100.4 208.9 L1101.2 206.2 L1102.1 207.5 L1102.9 207.9 L1103.7 206.3 L1104.5 206.9 L1105.4 204.8 L1106.2 200.5 L1107.0 203.4 L1107.9 209.0 L1108.7 209.4 L1109.5 208.6 L1110.4 213.0 L1111.2 217.1 L1112.0 212.1 L1112.8 207.2 L1113.7 209.4 L1114.5 208.0 L1115.3 203.0 L1116.2 200.4 L1117.0 204.2 L1117.8 210.6 L1118.6 212.0 L1119.5 207.9 L1120.3 204.0 L1121.1 207.5 L1122.0 211.8 L1122.8 211.1 L1123.6 208.7 L1124.4 210.3 L1125.3 210.5 L1126.1 207.3 L1126.9 203.6 L1127.8 205.4 L1128.6 205.6 L1129.4 204.3 L1130.3 205.8 L1131.1 204.8 L1131.9 201.0 L1132.7 202.1 L1133.6 201.8 L1134.4 201.6 L1135.2 204.8 L1136.1 207.3 L1136.9 206.7 L1137.7 206.6 L1138.5 205.0 L1139.4 204.8 L1140.2 208.2 L1141.0 214.2 L1141.9 214.3 L1142.7 210.4 L1143.5 211.8 L1144.3 215.5 L1145.2 212.3 L1146.0 205.4 L1146.8 201.0 L1147.7 203.9 L1148.5 208.5 L1149.3 211.9 L1150.2 210.4 L1151.0 205.0 L1151.8 203.5 L1152.6 205.5 L1153.5 207.3 L1154.3 202.8 L1155.1 210.6 L1156.0 217.3 L1156.8 207.6 L1157.6 207.2 L1158.4 209.7 L1159.3 207.4 L1160.1 203.7 L1160.9 204.7 L1161.8 206.9 L1162.6 204.0 L1163.4 199.2 L1164.2 201.5 L1165.1 207.7 L1165.9 209.2 L1166.7 206.3 L1167.6 206.0 L1168.4 205.3 L1169.2 204.2 L1170.1 210.7 L1170.9 216.7 L1171.7 216.9 L1172.5 213.4 L1173.4 208.5 L1174.2 207.0 L1175.0 209.8 L1175.9 208.0 L1176.7 205.7 L1177.5 204.3 L1178.3 204.2 L1179.2 204.4 L1180.0 202.6 L1180.8 199.1 L1181.7 201.9 L1182.5 206.1 L1183.3 210.1 L1184.1 214.6 L1185.0 218.5 L1185.8 214.6 L1186.6 210.7 L1187.5 210.4 L1188.3 210.9 L1189.1 209.1 L1190.0 209.9 L1190.8 209.9 L1191.6 205.5 L1192.4 202.3 L1193.3 204.2 L1194.1 204.9 L1194.9 204.7 L1195.8 209.5 L1196.6 213.7 L1197.4 210.5 L1198.2 208.9 L1199.1 212.7 L1199.9 211.4 L1200.7 204.9 L1201.6 204.1 L1202.4 205.6 L1203.2 205.6 L1204.0 208.5 L1204.9 214.5 L1205.7 216.5 L1206.5 211.5 L1207.4 207.6 L1208.2 210.1 L1209.0 213.6 L1209.9 215.1 L1210.7 214.7 L1211.5 213.5 L1212.3 211.6 L1213.2 213.5 L1214.0 214.6 L1214.8 212.6 L1215.7 213.2 L1216.5 214.3 L1217.3 210.0 L1218.1 211.9 L1219.0 217.4 L1219.8 214.5 L1220.6 209.8 L1221.5 207.9 L1222.3 205.4 L1223.1 203.5 L1223.9 204.4 L1224.8 203.8 L1225.6 202.5 L1226.4 203.2 L1227.3 209.5 L1228.1 212.5 L1228.9 206.9 L1229.8 203.2 L1230.6 207.8 L1231.4 207.0 L1232.2 206.2 L1233.1 209.6 L1233.9 205.8 L1234.7 201.6 L1235.6 205.8 L1236.4 204.5 L1237.2 201.5 L1238.0 204.5 L1238.9 205.3 L1239.7 206.2 L1240.5 209.8 L1241.4 209.7 L1242.2 206.2 L1243.0 205.4 L1243.8 207.4 L1244.7 210.8 L1245.5 212.5 L1246.3 209.7 L1247.2 206.1 L1248.0 208.0 L1248.8 212.4 L1249.7 207.8 L1250.5 199.5 L1251.3 199.0 L1252.1 209.0 L1253.0 214.3 L1253.8 210.2 L1254.6 202.8 L1255.5 201.5 L1256.3 204.2 L1257.1 206.9 L1257.9 210.3 L1258.8 211.7 L1259.6 208.0 L1260.4 206.8 L1261.3 207.7 L1262.1 202.3 L1262.9 202.9 L1263.8 210.8 L1264.6 212.4 L1265.4 208.3 L1266.2 208.0 L1267.1 211.0 L1267.9 208.4 L1268.7 201.6 L1269.6 203.5 L1270.4 212.7 L1271.2 211.7 L1272.0 203.7 L1272.9 199.1 L1273.7 199.5 L1274.5 204.2 L1275.4 209.2 L1276.2 212.9 L1277.0 216.0 L1277.8 214.6 L1278.7 209.0 L1279.5 208.1 L1280.3 210.0 L1281.2 209.3 L1282.0 206.5 L1282.8 205.3 L1283.7 205.4 L1284.5 207.2 L1285.3 207.6 L1286.1 206.4 L1287.0 208.3 L1287.8 212.0 L1288.6 211.8 L1289.5 209.7 L1290.3 208.5 L1291.1 208.1 L1291.9 207.8 L1292.8 208.1 L1293.6 210.7 L1294.4 211.8 L1295.3 207.4 L1296.1 203.6 L1296.9 205.5 L1297.7 207.4 L1298.6 209.0 L1299.4 214.0 L1300.2 215.9 L1301.1 213.2 L1301.9 209.9 L1302.7 209.6 L1303.6 215.1 L1304.4 220.4 L1305.2 213.5 L1306.0 206.0 L1306.9 209.2 L1307.7 214.7 L1308.5 212.3 L1309.4 207.2 L1310.2 205.6 L1311.0 204.3 L1311.8 202.2 L1312.7 209.4 L1313.5 206.2 L1314.3 203.6 L1315.2 200.5 L1316.0 200.6 L1316.8 205.4 L1317.6 210.2 L1318.5 209.5 L1319.3 206.9 L1320.1 206.2 L1321.0 204.5 L1321.8 203.0 L1322.6 204.9 L1323.5 203.0 L1324.3 198.6 L1325.1 200.4 L1325.9 206.7 L1326.8 203.9 L1327.6 200.7 L1328.4 209.9 L1329.3 204.5 L1330.1 203.8 L1330.9 208.7 L1331.7 211.7 L1332.6 209.2 L1333.4 204.9 L1334.2 202.8 L1335.1 203.9 L1335.9 205.4 L1336.7 204.7 L1337.5 204.8 L1338.4 206.7 L1339.2 208.3 L1340.0 207.8 L1340.9 208.5 L1341.7 211.6 L1342.5 212.2 L1343.4 212.1 L1344.2 213.7 L1345.0 215.9 L1345.8 216.6 L1346.7 213.1 L1347.5 206.8 L1348.3 205.7 L1349.2 208.0 L1350.0 211.7 L1350.8 210.0 L1351.6 204.3 L1352.5 201.6 L1353.3 205.6 L1354.1 209.6 L1355.0 213.7 L1355.8 213.0 L1356.6 207.5 L1357.4 207.4 L1358.3 212.8 L1359.1 217.0 L1359.9 209.6 L1360.8 216.0 L1361.6 219.1 L1362.4 216.0 L1363.3 214.7 L1364.1 213.8 L1364.9 210.3 L1365.7 206.4 L1366.6 204.7 L1367.4 202.4 L1368.2 200.4 L1369.1 204.4 L1369.9 211.3 L1370.7 214.1 L1371.5 214.5 L1372.4 213.8 L1373.2 210.5 L1374.0 207.7 L1374.9 209.6 L1375.7 214.7 L1376.5 215.1 L1377.3 211.0 L1378.2 209.6 L1379.0 209.8 L1379.8 210.5 L1380.7 209.6 L1381.5 206.9 L1382.3 206.2 L1383.2 209.2 L1384.0 211.0 L1384.8 214.9 L1385.6 218.9 L1386.5 216.2 L1387.3 212.6 L1388.1 212.7 L1389.0 210.2 L1389.8 210.0 L1390.6 212.9 L1391.4 212.1 L1392.3 209.0 L1393.1 206.4 L1393.9 205.7 L1394.8 208.9 L1395.6 211.4 L1396.4 210.5 L1397.2 207.6 L1398.1 205.7 L1398.9 207.4 L1399.7 212.5 L1400.6 214.6 L1401.4 213.2 L1402.2 213.3 L1403.1 213.4 L1403.9 211.6 L1404.7 213.9 L1405.5 208.0 L1406.4 207.3 L1407.2 204.7 L1408.0 202.4 L1408.9 203.4 L1409.7 205.3 L1410.5 204.1 L1411.3 208.9 L1412.2 215.2 L1413.0 214.5 L1413.8 207.9 L1414.7 202.0 L1415.5 199.4 L1416.3 201.0 L1417.1 202.5 L1418.0 202.1 L1418.8 203.2 L1419.6 205.4 L1420.5 207.1 L1421.3 209.0 L1422.1 208.8 L1423.0 208.4 L1423.8 209.1 L1424.6 205.7 L1425.4 201.7 L1426.3 205.3 L1427.1 206.7 L1427.9 204.7 L1428.8 207.7 L1429.6 210.4 L1430.4 208.0 L1431.2 204.9 L1432.1 206.5 L1432.9 206.5 L1433.7 201.3 L1434.6 200.1 L1435.4 204.9 L1436.2 208.3 L1437.0 206.8 L1437.9 206.0 L1438.7 206.9 L1439.5 208.4 L1440.4 209.9 L1441.2 210.1 L1442.0 205.0 L1442.9 203.0 L1443.7 207.3 L1444.5 209.1 L1445.3 207.1 L1446.2 206.6 L1447.0 204.8 L1447.8 201.1 L1448.7 208.7 L1449.5 204.0 L1450.3 202.2 L1451.1 203.0 L1452.0 207.1 L1452.8 209.1 L1453.6 212.7 L1454.5 210.8 L1455.3 203.5 L1456.1 203.1 L1456.9 212.4 L1457.8 218.1 L1458.6 214.0 L1459.4 208.4 L1460.3 207.9 L1461.1 209.9 L1461.9 209.7 L1462.8 211.2 L1463.6 212.0 L1464.4 212.8 L1465.2 213.0 L1466.1 210.6 L1466.9 206.7 L1467.7 206.8 L1468.6 213.3 L1469.4 211.3 L1470.2 210.3 L1471.0 206.9 L1471.9 203.0 L1472.7 203.4 L1473.5 208.2 L1474.4 211.3 L1475.2 213.1 L1476.0 213.2 L1476.8 210.6 L1477.7 207.2 L1478.5 205.3 L1479.3 202.0 L1480.2 202.1 L1481.0 206.9 L1481.8 204.7 L1482.7 202.9 L1483.5 210.2 L1484.3 213.0 L1485.1 208.5 L1486.0 206.9 L1486.8 207.3 L1487.6 207.8 L1488.5 207.6 L1489.3 206.2 L1490.1 209.2 L1490.9 214.5 L1491.8 214.5 L1492.6 211.8 L1493.4 213.5 L1494.3 212.4 L1495.1 209.4 L1495.9 208.2 L1496.7 206.2 L1497.6 204.4 L1498.4 205.2 L1499.2 206.4 L1500.1 210.3 L1500.9 213.0 L1501.7 210.2 L1502.6 207.9 L1503.4 209.4 L1504.2 208.3 L1505.0 212.0 L1505.9 208.7 L1506.7 204.6 L1507.5 202.4 L1508.4 206.6 L1509.2 209.2 L1510.0 205.9 L1510.8 203.3 L1511.7 203.1 L1512.5 206.2 L1513.3 209.0 L1514.2 209.7 L1515.0 211.6 L1515.8 211.4 L1516.6 205.4 L1517.5 206.1 L1518.3 211.0 L1519.1 209.4 L1520.0 206.7 L1520.8 206.6 L1521.6 209.1 L1522.5 212.8 L1523.3 209.0 L1524.1 205.1 L1524.9 209.3 L1525.8 215.0 L1526.6 216.6 L1527.4 214.0 L1528.3 206.5 L1529.1 201.7 L1529.9 203.6 L1530.7 202.9 L1531.6 201.8 L1532.4 207.2 L1533.2 210.4 L1534.1 206.9 L1534.9 207.5 L1535.7 212.6 L1536.5 213.3 L1537.4 209.0 L1538.2 209.3 L1539.0 212.3 L1539.9 212.2 L1540.7 209.5 L1541.5 208.0 L1542.4 208.0 L1543.2 209.4 L1544.0 207.7 L1544.8 203.1 L1545.7 202.7 L1546.5 205.5 L1547.3 207.6 L1548.2 209.0 L1549.0 208.0 L1549.8 203.1 L1550.6 202.8 L1551.5 206.9 L1552.3 208.8 L1553.1 210.3 L1554.0 212.5 L1554.8 212.0 L1555.6 209.6 L1556.5 210.2 L1557.3 214.5 L1558.1 216.2 L1558.9 211.0 L1559.8 208.2 L1560.6 207.8 L1561.4 206.8 L1562.3 208.4 L1563.1 209.6 L1563.9 210.4 L1564.7 213.3 L1565.6 212.9 L1566.4 207.8 L1567.2 205.7 L1568.1 206.4 L1568.9 208.4 L1569.7 208.9 L1570.5 205.2 L1571.4 203.4 L1572.2 202.9 L1573.0 202.8 L1573.9 205.7 L1574.7 208.6 L1575.5 205.4 L1576.4 206.5 L1577.2 213.5 L1578.0 215.4 L1578.8 208.1 L1579.7 203.0 L1580.5 199.7 L1581.3 198.0 L1582.2 201.9 L1583.0 204.8 L1583.8 203.6 L1584.6 201.8 L1585.5 203.9 L1586.3 209.1 L1587.1 216.9 L1588.0 217.5 L1588.8 211.6 L1589.6 205.5 L1590.4 201.4 L1591.3 199.0 L1592.1 204.0 L1592.9 209.0 L1593.8 210.8 L1594.6 211.9 L1595.4 209.6 L1596.3 206.2 L1597.1 205.8 L1597.9 207.2 L1598.7 205.9 L1599.6 203.7 L1600.4 204.2 L1601.2 205.4 L1602.1 205.5 L1602.9 208.3 L1603.7 208.3 L1604.5 203.6 L1605.4 204.6 L1606.2 207.2 L1607.0 204.6 L1607.9 206.6 L1608.7 208.3 L1609.5 203.9 L1610.3 201.3 L1611.2 203.0 L1612.0 204.8 L1612.8 209.5 L1613.7 210.1 L1614.5 206.3 L1615.3 205.3 L1616.2 206.8 L1617.0 205.9 L1617.8 204.5 L1618.6 205.0 L1619.5 206.6 L1620.3 211.1 L1621.1 214.0 L1622.0 210.4 L1622.8 202.8 L1623.6 201.7 L1624.4 205.5 L1625.3 204.7 L1626.1 202.3 L1626.9 203.4 L1627.8 201.7 L1628.6 199.8 L1629.4 201.2 L1630.2 203.7 L1631.1 206.1 L1631.9 207.1 L1632.7 206.1 L1633.6 204.2 L1634.4 198.4 L1635.2 198.1 L1636.1 205.3 L1636.9 208.5 L1637.7 207.7 L1638.5 207.9 L1639.4 205.7 L1640.2 204.2 L1641.0 205.3 L1641.9 208.0 L1642.7 209.0 L1643.5 209.5 L1644.3 211.2 L1645.2 212.3 L1646.0 210.1 L1646.8 207.2 L1647.7 204.4 L1648.5 205.4 L1649.3 206.7 L1650.1 202.7 L1651.0 200.6 L1651.8 203.1 L1652.6 203.2 L1653.5 201.6 L1654.3 205.9 L1655.1 205.8 L1656.0 197.2 L1656.8 198.9 L1657.6 209.1 L1658.4 209.6 L1659.3 203.8 L1660.1 201.8 L1660.9 203.5 L1661.8 208.4 L1662.6 216.6 L1663.4 206.6 L1664.2 205.4 L1665.1 210.3 L1665.9 212.1 L1666.7 212.3 L1667.6 213.6 L1668.4 212.0 L1669.2 208.1 L1670.0 207.7 L1670.9 210.1 L1671.7 211.9 L1672.5 210.1 L1673.4 209.2 L1674.2 209.4 L1675.0 207.1 L1675.9 202.9 L1676.7 199.3 L1677.5 201.3 L1678.3 207.6 L1679.2 214.5 L1680.0 212.6 L1680.8 207.2 L1681.7 206.5 L1682.5 208.0 L1683.3 208.4 L1684.1 210.2 L1685.0 208.7 L1685.8 210.2 L1686.6 213.0 L1687.5 208.0 L1688.3 206.9 L1689.1 210.2 L1689.9 208.3 L1690.8 205.0 L1691.6 205.3 L1692.4 203.5 L1693.3 203.6 L1694.1 205.0 L1694.9 206.5 L1695.8 206.7 L1696.6 208.1 L1697.4 209.7 L1698.2 207.1 L1699.1 207.5 L1699.9 204.3 L1700.7 210.2 L1701.6 213.8 L1702.4 212.7 L1703.2 207.8 L1704.0 204.7 L1704.9 204.9 L1705.7 206.5 L1706.5 205.8 L1707.4 205.5 L1708.2 208.9 L1709.0 210.0 L1709.8 207.3 L1710.7 208.1 L1711.5 211.2 L1712.3 212.3 L1713.2 210.3 L1714.0 207.6 L1714.8 209.7 L1715.7 212.3 L1716.5 210.5 L1717.3 210.6 L1718.1 211.7 L1719.0 210.3 L1719.8 210.7 L1720.6 210.8 L1721.5 206.6 L1722.3 206.7 L1723.1 210.2 L1723.9 212.7 L1724.8 209.4 L1725.6 206.8 L1726.4 207.2 L1727.3 210.3 L1728.1 210.7 L1728.9 207.1 L1729.7 208.6 L1730.6 217.5 L1731.4 217.9 L1732.2 212.5 L1733.1 213.9 L1733.9 212.0 L1734.7 208.0 L1735.6 212.8 L1736.4 217.6 L1737.2 217.5 L1738.0 216.3 L1738.9 215.1 L1739.7 214.4 L1740.5 213.4 L1741.4 210.8 L1742.2 215.3 L1743.0 222.7 L1743.8 221.4 L1744.7 213.9 L1745.5 213.1 L1746.3 216.0 L1747.2 214.2 L1748.0 212.3 L1748.8 217.7 L1749.6 223.2 L1750.5 220.3 L1751.3 213.5 L1752.1 211.7 L1753.0 217.6 L1753.8 223.2 L1754.6 220.4 L1755.5 211.3 L1756.3 210.5 L1757.1 216.9 L1757.9 220.6 L1758.8 216.9 L1759.6 216.0 L1760.4 216.0 L1761.3 216.9 L1762.1 218.3 L1762.9 219.9 L1763.7 219.4 L1764.6 220.3 L1765.4 223.4 L1766.2 223.1 L1767.1 217.7 L1767.9 217.0 L1768.7 219.9 L1769.5 217.7 L1770.4 217.4 L1771.2 220.8 L1772.0 220.5 L1772.9 217.0 L1773.7 217.5 L1774.5 223.4 L1775.4 224.6 L1776.2 218.9 L1777.0 216.5 L1777.8 219.7 L1778.7 220.2 L1779.5 220.3 L1780.3 222.6 L1781.2 225.3 L1782.0 225.2 L1782.8 224.3 L1783.6 225.1 L1784.5 223.7 L1785.3 222.4 L1786.1 221.9 L1787.0 222.1 L1787.8 221.5 L1788.6 218.3 L1789.4 214.8 L1790.3 218.2 L1791.1 221.8 L1791.9 220.8 L1792.8 222.4 L1793.6 226.1 L1794.4 224.5 L1795.3 221.2 L1796.1 220.8 L1796.9 219.0 L1797.7 215.9 L1798.6 214.3 L1799.4 214.4 L1800.2 216.6 L1801.1 219.4 L1801.9 220.5 L1802.7 220.9 L1803.5 221.2 L1804.4 223.5 L1805.2 225.6 L1806.0 223.4 L1806.9 221.7 L1807.7 222.4 L1808.5 220.1 L1809.3 217.9 L1810.2 215.2 L1811.0 217.6 L1811.8 224.0 L1812.7 232.1 L1813.5 223.5 L1814.3 214.6 L1815.2 213.5 L1816.0 222.1 L1816.8 222.2 L1817.6 217.8 L1818.5 218.2 L1819.3 221.9 L1820.1 223.7 L1821.0 219.7 L1821.8 216.4 L1822.6 219.4 L1823.4 219.8 L1824.3 219.0 L1825.1 219.1 L1825.9 220.2 L1826.8 224.3 L1827.6 227.1 L1828.4 222.8 L1829.2 217.2" stroke="#eeeef6" stroke-width="1.7" fill="none" stroke-linejoin="round" clip-path="url(#c1)"/>
<path d="M1405.3 46 V269.9" stroke="#ffff55" stroke-width="1.3" fill="none"/>
<text x="965.4" y="51.2" font-size="20" text-anchor="end">40.0</text>
<text x="965.4" y="97.1" font-size="20" text-anchor="end">20.0</text>
<text x="965.4" y="141.8" font-size="20" text-anchor="end">0.0</text>
<text x="965.4" y="186.5" font-size="20" text-anchor="end">-20.0</text>
<text x="965.4" y="231.2" font-size="20" text-anchor="end">-40.0</text>
<text x="965.4" y="275.9" font-size="20" text-anchor="end">-60.0</text>
<text x="1047.5" y="292.3" font-size="20" text-anchor="middle">207.2</text>
<text x="1130.3" y="292.3" font-size="20" text-anchor="middle">207.4</text>
<text x="1213.1" y="292.3" font-size="20" text-anchor="middle">207.6</text>
<text x="1295.9" y="292.3" font-size="20" text-anchor="middle">207.8</text>
<text x="1378.7" y="292.3" font-size="20" text-anchor="middle">208</text>
<text x="1461.5" y="292.3" font-size="20" text-anchor="middle">208.2</text>
<text x="1544.3" y="292.3" font-size="20" text-anchor="middle">208.4</text>
<text x="1627.1" y="292.3" font-size="20" text-anchor="middle">208.6</text>
<text x="1709.9" y="292.3" font-size="20" text-anchor="middle">208.8</text>
<text x="1792.7" y="292.3" font-size="20" text-anchor="middle">209</text>
<text x="1404.8" y="324.5" font-size="23.5" text-anchor="middle">Frequency (MHz)</text>
<text transform="translate(884 158.2) rotate(-90)" font-size="23.5" text-anchor="middle">Magnitude (dB)</text>
<rect x="1384.25" y="470.5" width="62.25" height="354.1" fill="#3e3e3e"/>
<path d="M1341.50 470.5 V824.6 M1376.50 470.5 V824.6 M1411.50 470.5 V824.6 M1446.50 470.5 V824.6 M1481.50 470.5 V824.6 M1517.50 470.5 V824.6 M1552.50 470.5 V824.6 M1587.50 470.5 V824.6 M1622.50 470.5 V824.6 M1657.50 470.5 V824.6 M1692.50 470.5 V824.6 M1727.50 470.5 V824.6 M1763.50 470.5 V824.6 M1798.50 470.5 V824.6 M1833.50 470.5 V824.6 M1317 541.50 H1842.75 M1317 612.50 H1842.75 M1317 683.50 H1842.75 M1317 754.50 H1842.75" stroke="#8c8c8c" stroke-width="1" fill="none"/>
<path d="M1317 824.6 V470.5" stroke="#a0a0a0" stroke-width="1.5" fill="none"/>
<path d="M1316.5 470.5 H1843.55" stroke="#a0a0a0" stroke-width="2" fill="none"/>
<path d="M1842.75 470.5 V825.1" stroke="#a0a0a0" stroke-width="2" fill="none"/>
<path d="M1317 824.6 H1842.75" stroke="#a0a0a0" stroke-width="1.5" fill="none"/>
<path d="M1317.0 839.5 L1317.7 797.4 L1318.4 798.9 L1319.1 802.0 L1319.8 789.0 L1320.5 815.9 L1321.2 806.0 L1321.8 792.5 L1322.5 793.5 L1323.2 823.8 L1323.9 816.7 L1324.6 823.9 L1325.3 796.2 L1326.0 835.5 L1326.7 820.3 L1327.4 805.8 L1328.1 780.3 L1328.8 803.8 L1329.5 843.1 L1330.2 791.7 L1330.9 775.6 L1331.5 812.5 L1332.2 821.4 L1332.9 790.5 L1333.6 836.4 L1334.3 797.6 L1335.0 791.7 L1335.7 778.7 L1336.4 808.5 L1337.1 783.1 L1337.8 803.3 L1338.5 775.7 L1339.2 804.8 L1339.9 820.1 L1340.6 826.9 L1341.2 779.8 L1341.9 822.8 L1342.6 802.1 L1343.3 812.2 L1344.0 812.1 L1344.7 818.1 L1345.4 773.4 L1346.1 823.2 L1346.8 819.3 L1347.5 834.6 L1348.2 790.3 L1348.9 821.7 L1349.6 812.4 L1350.2 850.6 L1350.9 794.8 L1351.6 830.4 L1352.3 777.6 L1353.0 815.4 L1353.7 786.6 L1354.4 788.4 L1355.1 787.2 L1355.8 791.1 L1356.5 811.7 L1357.2 798.1 L1357.9 810.9 L1358.6 788.5 L1359.3 824.8 L1359.9 815.0 L1360.6 811.8 L1361.3 834.6 L1362.0 845.9 L1362.7 816.0 L1363.4 816.7 L1364.1 803.2 L1364.8 792.0 L1365.5 807.3 L1366.2 774.0 L1366.9 817.5 L1367.6 815.4 L1368.3 791.3 L1369.0 819.4 L1369.6 798.1 L1370.3 801.8 L1371.0 803.9 L1371.7 832.2 L1372.4 802.7 L1373.1 809.0 L1373.8 818.3 L1374.5 841.8 L1375.2 813.8 L1375.9 785.0 L1376.6 786.0 L1377.3 818.4 L1378.0 808.5 L1378.6 801.7 L1379.3 793.9 L1380.0 799.5 L1380.7 801.2 L1381.4 856.3 L1382.1 834.8 L1382.8 816.7 L1383.5 788.8 L1384.2 809.4 L1384.9 806.4 L1385.6 811.8 L1386.3 798.4 L1387.0 810.5 L1387.7 788.1 L1388.3 813.8 L1389.0 793.3 L1389.7 792.5 L1390.4 781.1 L1391.1 794.5 L1391.8 813.7 L1392.5 793.6 L1393.2 801.7 L1393.9 801.3 L1394.6 781.1 L1395.3 839.8 L1396.0 829.0 L1396.7 804.7 L1397.4 825.4 L1398.0 792.1 L1398.7 802.8 L1399.4 800.1 L1400.1 806.2 L1400.8 803.6 L1401.5 796.2 L1402.2 833.0 L1402.9 848.9 L1403.6 813.7 L1404.3 821.9 L1405.0 874.5 L1405.7 777.3 L1406.4 778.9 L1407.0 824.9 L1407.7 834.3 L1408.4 787.8 L1409.1 791.1 L1409.8 858.5 L1410.5 794.5 L1411.2 799.9 L1411.9 789.5 L1412.6 795.9 L1413.3 808.7 L1414.0 818.1 L1414.7 812.1 L1415.4 795.9 L1416.1 777.3 L1416.7 821.5 L1417.4 826.6 L1418.1 814.7 L1418.8 795.1 L1419.5 812.4 L1420.2 793.9 L1420.9 807.4 L1421.6 808.4 L1422.3 812.1 L1423.0 790.0 L1423.7 817.2 L1424.4 844.1 L1425.1 787.8 L1425.8 770.1 L1426.4 779.7 L1427.1 811.0 L1427.8 789.6 L1428.5 811.9 L1429.2 804.4 L1429.9 813.5 L1430.6 818.6 L1431.3 809.9 L1432.0 821.9 L1432.7 797.5 L1433.4 806.4 L1434.1 828.9 L1434.8 816.0 L1435.4 816.7 L1436.1 820.3 L1436.8 802.5 L1437.5 794.0 L1438.2 776.6 L1438.9 805.3 L1439.6 787.4 L1440.3 796.5 L1441.0 838.6 L1441.7 826.9 L1442.4 807.7 L1443.1 780.0 L1443.8 779.0 L1444.5 761.2 L1445.1 737.3 L1445.8 715.1 L1446.5 695.5 L1447.2 688.4 L1447.9 706.3 L1448.6 727.5 L1449.3 750.8 L1450.0 775.5 L1450.7 799.3 L1451.4 807.8 L1452.1 794.7 L1452.8 774.4 L1453.5 844.3 L1454.2 782.7 L1454.8 807.6 L1455.5 802.5 L1456.2 799.1 L1456.9 792.9 L1457.6 794.8 L1458.3 823.9 L1459.0 806.8 L1459.7 829.2 L1460.4 819.1 L1461.1 777.5 L1461.8 812.5 L1462.5 818.2 L1463.2 778.6 L1463.8 772.8 L1464.5 776.7 L1465.2 798.6 L1465.9 783.7 L1466.6 781.3 L1467.3 787.6 L1468.0 801.3 L1468.7 826.3 L1469.4 773.5 L1470.1 825.9 L1470.8 842.7 L1471.5 789.8 L1472.2 816.0 L1472.9 833.1 L1473.5 777.2 L1474.2 784.6 L1474.9 821.8 L1475.6 769.3 L1476.3 796.1 L1477.0 789.6 L1477.7 821.0 L1478.4 795.1 L1479.1 770.5 L1479.8 747.3 L1480.5 726.3 L1481.2 708.8 L1481.9 718.0 L1482.6 737.8 L1483.2 760.2 L1483.9 784.2 L1484.6 809.6 L1485.3 813.5 L1486.0 806.1 L1486.7 829.7 L1487.4 764.4 L1488.1 802.2 L1488.8 840.5 L1489.5 811.7 L1490.2 794.4 L1490.9 797.1 L1491.6 798.3 L1492.2 795.1 L1492.9 791.7 L1493.6 781.3 L1494.3 788.9 L1495.0 812.7 L1495.7 771.9 L1496.4 812.3 L1497.1 874.7 L1497.8 813.6 L1498.5 792.3 L1499.2 787.1 L1499.9 814.1 L1500.6 781.2 L1501.3 796.7 L1501.9 793.9 L1502.6 818.7 L1503.3 792.5 L1504.0 820.8 L1504.7 774.6 L1505.4 837.0 L1506.1 830.3 L1506.8 800.4 L1507.5 775.9 L1508.2 788.3 L1508.9 794.6 L1509.6 822.4 L1510.3 793.9 L1511.0 806.3 L1511.6 786.6 L1512.3 786.4 L1513.0 763.2 L1513.7 742.2 L1514.4 724.8 L1515.1 734.7 L1515.8 754.6 L1516.5 776.9 L1517.2 778.3 L1517.9 800.0 L1518.6 833.9 L1519.3 845.3 L1520.0 773.4 L1520.7 836.0 L1521.3 814.2 L1522.0 810.0 L1522.7 827.6 L1523.4 798.6 L1524.1 774.8 L1524.8 840.3 L1525.5 840.1 L1526.2 816.3 L1526.9 809.4 L1527.6 803.0 L1528.3 772.6 L1529.0 823.0 L1529.7 787.1 L1530.3 773.6 L1531.0 794.9 L1531.7 817.4 L1532.4 848.6 L1533.1 779.7 L1533.8 818.7 L1534.5 809.2 L1535.2 784.4 L1535.9 794.6 L1536.6 775.7 L1537.3 798.6 L1538.0 809.0 L1538.7 804.7 L1539.4 811.9 L1540.0 795.7 L1540.7 802.6 L1541.4 798.6 L1542.1 807.7 L1542.8 809.0 L1543.5 795.0 L1544.2 776.9 L1544.9 806.4 L1545.6 810.7 L1546.3 837.3 L1547.0 798.3 L1547.7 774.5 L1548.4 804.2 L1549.1 795.8 L1549.7 805.3 L1550.4 827.0 L1551.1 841.2 L1551.8 828.1 L1552.5 809.9 L1553.2 807.0 L1553.9 795.0 L1554.6 796.0 L1555.3 827.8 L1556.0 808.3 L1556.7 794.3 L1557.4 812.5 L1558.1 773.3 L1558.7 798.4 L1559.4 810.7 L1560.1 810.2 L1560.8 789.3 L1561.5 806.6 L1562.2 796.0 L1562.9 791.6 L1563.6 790.7 L1564.3 810.1 L1565.0 792.1 L1565.7 811.0 L1566.4 810.3 L1567.1 803.9 L1567.8 802.4 L1568.4 810.3 L1569.1 767.1 L1569.8 787.9 L1570.5 825.9 L1571.2 779.8 L1571.9 800.3 L1572.6 807.7 L1573.3 802.9 L1574.0 788.7 L1574.7 828.9 L1575.4 813.0 L1576.1 797.2 L1576.8 791.6 L1577.5 825.4 L1578.1 813.7 L1578.8 805.9 L1579.5 790.3 L1580.2 789.1 L1580.9 800.4 L1581.6 797.1 L1582.3 826.6 L1583.0 782.2 L1583.7 798.8 L1584.4 805.0 L1585.1 799.6 L1585.8 815.4 L1586.5 785.4 L1587.1 791.5 L1587.8 822.2 L1588.5 808.9 L1589.2 820.4 L1589.9 795.6 L1590.6 806.7 L1591.3 778.5 L1592.0 820.9 L1592.7 830.2 L1593.4 806.3 L1594.1 800.6 L1594.8 769.8 L1595.5 793.1 L1596.2 807.0 L1596.8 797.5 L1597.5 795.4 L1598.2 853.7 L1598.9 790.6 L1599.6 797.3 L1600.3 777.6 L1601.0 823.5 L1601.7 811.9 L1602.4 814.0 L1603.1 837.3 L1603.8 800.8 L1604.5 827.6 L1605.2 829.9 L1605.9 820.2 L1606.5 826.4 L1607.2 787.9 L1607.9 805.5 L1608.6 812.2 L1609.3 824.4 L1610.0 824.5 L1610.7 828.7 L1611.4 842.7 L1612.1 804.8 L1612.8 788.8 L1613.5 804.4 L1614.2 807.3 L1614.9 860.4 L1615.5 825.4 L1616.2 803.9 L1616.9 808.9 L1617.6 825.3 L1618.3 789.8 L1619.0 798.3 L1619.7 809.1 L1620.4 787.9 L1621.1 835.6 L1621.8 808.7 L1622.5 849.2 L1623.2 844.0 L1623.9 765.2 L1624.6 807.4 L1625.2 791.4 L1625.9 805.1 L1626.6 806.8 L1627.3 797.0 L1628.0 809.7 L1628.7 780.0 L1629.4 791.2 L1630.1 803.4 L1630.8 797.0 L1631.5 779.6 L1632.2 788.7 L1632.9 812.3 L1633.6 835.9 L1634.3 794.4 L1634.9 802.2 L1635.6 785.7 L1636.3 812.0 L1637.0 801.7 L1637.7 793.3 L1638.4 849.4 L1639.1 811.8 L1639.8 817.3 L1640.5 809.0 L1641.2 827.1 L1641.9 814.4 L1642.6 804.9 L1643.3 804.0 L1643.9 796.8 L1644.6 803.9 L1645.3 796.4 L1646.0 790.0 L1646.7 778.8 L1647.4 838.6 L1648.1 795.7 L1648.8 809.1 L1649.5 803.0 L1650.2 794.2 L1650.9 797.5 L1651.6 787.4 L1652.3 806.5 L1653.0 808.8 L1653.6 796.1 L1654.3 781.6 L1655.0 805.6 L1655.7 785.4 L1656.4 816.0 L1657.1 782.1 L1657.8 814.3 L1658.5 813.8 L1659.2 802.2 L1659.9 817.8 L1660.6 775.9 L1661.3 784.5 L1662.0 802.4 L1662.7 801.9 L1663.3 809.6 L1664.0 799.3 L1664.7 813.3 L1665.4 836.7 L1666.1 773.5 L1666.8 794.7 L1667.5 830.6 L1668.2 825.1 L1668.9 791.3 L1669.6 784.4 L1670.3 800.0 L1671.0 808.3 L1671.7 795.8 L1672.3 796.3 L1673.0 810.1 L1673.7 814.4 L1674.4 798.7 L1675.1 795.1 L1675.8 807.6 L1676.5 796.0 L1677.2 820.1 L1677.9 779.9 L1678.6 784.6 L1679.3 807.8 L1680.0 807.9 L1680.7 794.2 L1681.4 794.1 L1682.0 833.0 L1682.7 793.1 L1683.4 808.8 L1684.1 793.0 L1684.8 798.9 L1685.5 788.3 L1686.2 782.1 L1686.9 797.3 L1687.6 796.6 L1688.3 825.8 L1689.0 808.8 L1689.7 822.4 L1690.4 780.7 L1691.1 799.9 L1691.7 824.7 L1692.4 854.4 L1693.1 800.8 L1693.8 815.2 L1694.5 819.7 L1695.2 823.2 L1695.9 795.8 L1696.6 808.0 L1697.3 811.0 L1698.0 821.2 L1698.7 805.7 L1699.4 817.0 L1700.1 768.2 L1700.7 772.5 L1701.4 840.9 L1702.1 802.9 L1702.8 830.2 L1703.5 834.9 L1704.2 807.0 L1704.9 821.5 L1705.6 810.9 L1706.3 773.2 L1707.0 787.1 L1707.7 873.6 L1708.4 792.6 L1709.1 839.9 L1709.8 781.6 L1710.4 849.6 L1711.1 791.0 L1711.8 866.9 L1712.5 778.5 L1713.2 790.3 L1713.9 816.7 L1714.6 820.1 L1715.3 807.0 L1716.0 773.3 L1716.7 811.0 L1717.4 797.7 L1718.1 833.8 L1718.8 812.5 L1719.5 813.2 L1720.1 803.3 L1720.8 798.6 L1721.5 817.5 L1722.2 802.3 L1722.9 833.3 L1723.6 820.7 L1724.3 805.2 L1725.0 826.4 L1725.7 811.8 L1726.4 807.7 L1727.1 815.9 L1727.8 799.2 L1728.5 787.8 L1729.1 795.4 L1729.8 809.3 L1730.5 783.8 L1731.2 867.2 L1731.9 792.9 L1732.6 779.4 L1733.3 857.5 L1734.0 784.9 L1734.7 800.4 L1735.4 834.8 L1736.1 778.5 L1736.8 803.8 L1737.5 796.9 L1738.2 805.0 L1738.8 828.8 L1739.5 814.5 L1740.2 795.4 L1740.9 815.6 L1741.6 836.3 L1742.3 783.7 L1743.0 796.1 L1743.7 805.1 L1744.4 811.8 L1745.1 775.9 L1745.8 880.9 L1746.5 799.9 L1747.2 809.2 L1747.9 782.9 L1748.5 776.9 L1749.2 803.7 L1749.9 784.2 L1750.6 790.9 L1751.3 811.2 L1752.0 833.0 L1752.7 777.1 L1753.4 775.1 L1754.1 770.4 L1754.8 835.1 L1755.5 780.1 L1756.2 792.0 L1756.9 782.5 L1757.5 804.3 L1758.2 804.4 L1758.9 783.8 L1759.6 781.6 L1760.3 784.7 L1761.0 787.6 L1761.7 797.4 L1762.4 772.3 L1763.1 807.8 L1763.8 785.7 L1764.5 843.1 L1765.2 811.3 L1765.9 776.5 L1766.6 792.1 L1767.2 849.1 L1767.9 842.4 L1768.6 782.6 L1769.3 794.1 L1770.0 840.1 L1770.7 801.9 L1771.4 783.9 L1772.1 802.5 L1772.8 785.0 L1773.5 792.8 L1774.2 798.2 L1774.9 804.0 L1775.6 816.2 L1776.3 780.1 L1776.9 803.8 L1777.6 806.2 L1778.3 785.6 L1779.0 793.9 L1779.7 815.4 L1780.4 806.4 L1781.1 802.6 L1781.8 838.1 L1782.5 807.1 L1783.2 797.1 L1783.9 792.5 L1784.6 837.9 L1785.3 807.6 L1785.9 829.4 L1786.6 829.5 L1787.3 824.3 L1788.0 788.9 L1788.7 801.3 L1789.4 767.8 L1790.1 788.4 L1790.8 801.5 L1791.5 843.4 L1792.2 783.0 L1792.9 827.7 L1793.6 812.2 L1794.3 780.7 L1795.0 822.7 L1795.6 820.2 L1796.3 803.5 L1797.0 800.1 L1797.7 782.9 L1798.4 789.9 L1799.1 799.2 L1799.8 794.0 L1800.5 835.8 L1801.2 814.0 L1801.9 787.1 L1802.6 787.9 L1803.3 816.5 L1804.0 765.9 L1804.7 797.8 L1805.3 765.5 L1806.0 790.1 L1806.7 810.0 L1807.4 844.7 L1808.1 801.7 L1808.8 815.5 L1809.5 816.7 L1810.2 793.8 L1810.9 815.3 L1811.6 804.4 L1812.3 817.0 L1813.0 791.7 L1813.7 780.8 L1814.3 795.0 L1815.0 803.6 L1815.7 789.6 L1816.4 795.8 L1817.1 786.1 L1817.8 829.5 L1818.5 793.9 L1819.2 779.0 L1819.9 797.2 L1820.6 817.2 L1821.3 821.2 L1822.0 804.1 L1822.7 802.0 L1823.4 807.8 L1824.0 795.1 L1824.7 783.8 L1825.4 790.2 L1826.1 789.9 L1826.8 790.8 L1827.5 798.9 L1828.2 846.8 L1828.9 854.4 L1829.6 828.2 L1830.3 785.4 L1831.0 807.5 L1831.7 836.5 L1832.4 814.6 L1833.1 774.0 L1833.7 795.5 L1834.4 781.7 L1835.1 804.9 L1835.8 782.5 L1836.5 827.8 L1837.2 804.6 L1837.9 871.8 L1838.6 819.4 L1839.3 776.1 L1840.0 798.2 L1840.7 787.3 L1841.4 814.7 L1842.1 772.2 L1842.8 772.2" stroke="#f4f4f4" stroke-width="1.25" fill="none" stroke-linejoin="round" clip-path="url(#c2)"/>
<path d="M1446.5 471 V676" stroke="#ffff90" stroke-width="1" stroke-dasharray="1 1" fill="none" shape-rendering="crispEdges"/>
<path d="M1447 686 V825.1" stroke="#ffffa0" stroke-width="1.8" fill="none"/>
<path d="M1446.6 824.6 V826.2" stroke="#d8d850" stroke-width="1" fill="none"/>
<circle cx="1447.2" cy="681.4" r="6" fill="#ffff1e"/>
<circle cx="1481.25" cy="702.5" r="6" fill="#e8000a"/>
<circle cx="1514.5" cy="718.75" r="6" fill="#1aa0e6"/>
<text x="1304.8" y="476.8" font-size="20" text-anchor="end">-10.0</text>
<text x="1304.8" y="547.8" font-size="20" text-anchor="end">-20.0</text>
<text x="1304.8" y="618.8" font-size="20" text-anchor="end">-30.0</text>
<text x="1304.8" y="689.8" font-size="20" text-anchor="end">-40.0</text>
<text x="1304.8" y="760.8" font-size="20" text-anchor="end">-50.0</text>
<text x="1304.8" y="831.0" font-size="20" text-anchor="end">-60.0</text>
<text x="1340.9" y="846" font-size="14.2" text-anchor="middle">-60</text>
<text x="1375.9" y="866" font-size="14.2" text-anchor="middle">-40</text>
<text x="1410.9" y="846" font-size="14.2" text-anchor="middle">-20</text>
<text x="1446.5" y="866" font-size="14.2" text-anchor="middle">0</text>
<text x="1481.5" y="846" font-size="14.2" text-anchor="middle">20</text>
<text x="1517.5" y="866" font-size="14.2" text-anchor="middle">40</text>
<text x="1552.5" y="846" font-size="14.2" text-anchor="middle">60</text>
<text x="1587.5" y="866" font-size="14.2" text-anchor="middle">80</text>
<text x="1622.5" y="846" font-size="14.2" text-anchor="middle">100</text>
<text x="1657.5" y="866" font-size="14.2" text-anchor="middle">120</text>
<text x="1692.5" y="846" font-size="14.2" text-anchor="middle">140</text>
<text x="1727.5" y="866" font-size="14.2" text-anchor="middle">160</text>
<text x="1763.5" y="846" font-size="14.2" text-anchor="middle">180</text>
<text x="1798.5" y="866" font-size="14.2" text-anchor="middle">200</text>
<text x="1833.5" y="846" font-size="14.2" text-anchor="middle">220</text>
<text x="1579.5" y="893.6" font-size="20" text-anchor="middle">Distance Difference (km)</text>
<text transform="translate(1237.5 648) rotate(-90)" font-size="20" text-anchor="middle">Magnitude (dB)</text>
</svg>
<svg style="position:absolute;left:0;top:0" width="1872" height="912" viewBox="0 0 1872 912">
<text transform="translate(901.97 15.00) scale(1.0339 1)" font-size="21.80" style="fill:#fff;font-family:'Liberation Sans'">Frontend</text>
<text transform="translate(15.30 151.30) scale(1.0439 1)" font-size="21.80" style="fill:#ff1414;font-family:'Liberation Sans'">43 ppm Correction</text>
<text transform="translate(24.96 214.80) scale(1.0392 1)" font-size="24.71" style="fill:#dcdcdc;font-family:'Liberation Sans'">Connection</text>
<text transform="translate(193.31 214.80) scale(0.9938 1)" font-size="24.71" style="fill:#dcdcdc;font-family:'Liberation Sans'">Recorder</text>
<text transform="translate(333.11 214.80) scale(0.9460 1)" font-size="24.71" style="fill:#fff;font-family:'Liberation Sans'">FC0013</text>
<text transform="translate(24.00 272.60) scale(0.8788 1)" font-size="27.03" style="fill:#fff;font-family:'Liberation Sans'">AGC</text>
<text transform="translate(190.00 275.10) scale(0.9953 1)" font-size="25.44" style="fill:#fff;font-family:'Liberation Sans'">On/Off</text>
<text transform="translate(23.03 331.30) scale(0.9750 1)" font-size="26.60" style="fill:#fff;font-family:'Liberation Sans'">Gain</text>
<text transform="translate(41.25 388.10) scale(0.9881 1)" font-size="18.75" style="fill:#fff;font-family:'Liberation Sans'">9D</text>
<text transform="translate(166.52 390.50) scale(0.9761 1)" font-size="22.30" style="fill:#fff;font-family:'Liberation Sans'">EId: 0</text>
<text transform="translate(284.00 390.70) scale(1.0354 1)" font-size="23.00" style="fill:#fff;font-family:'Liberation Sans'">0001-01-01</text>
<text transform="translate(420.00 390.70) scale(0.9825 1)" font-size="23.00" style="fill:#fff;font-family:'Liberation Sans'">00:00:00 Z</text>
<text transform="translate(1799.27 386.90) scale(0.9823 1)" font-size="18.30" style="fill:#fff;font-family:'Liberation Sans'">DAB</text>
<text transform="translate(6.73 445.70) scale(1.0094 1)" font-size="29.00" style="fill:#ffff2a;font-family:'Liberation Sans'">No Service</text>
<text transform="translate(307.00 445.70) scale(0.9974 1)" font-size="29.00" style="fill:#fff;font-family:'Liberation Sans'">Service Quality</text>
<text transform="translate(315.50 506.30) scale(0.8772 1)" font-size="21.80" style="fill:#fff;font-family:'Liberation Sans'">SNR (dB)</text>
<text transform="translate(314.60 552.17) scale(0.8981 1)" font-size="21.80" style="fill:#fff;font-family:'Liberation Sans'">FIC (ok %)</text>
<text transform="translate(314.61 598.04) scale(0.8913 1)" font-size="21.80" style="fill:#fff;font-family:'Liberation Sans'">RS (ok %)</text>
<text transform="translate(314.53 643.91) scale(0.9682 1)" font-size="21.80" style="fill:#fff;font-family:'Liberation Sans'">Null Symbol</text>
<text transform="translate(315.50 689.78) scale(0.9337 1)" font-size="21.80" style="fill:#fff;font-family:'Liberation Sans'">SymbolTime (ms)</text>
<text transform="translate(314.57 735.65) scale(0.9274 1)" font-size="21.80" style="fill:#fff;font-family:'Liberation Sans'">FrameTime (ms)</text>
<text transform="translate(646.00 453.40) scale(0.9012 1)" font-size="24.71" style="fill:#dcdcdc;font-family:'Liberation Sans'">AAC</text>
<text transform="translate(803.95 453.40) scale(1.0509 1)" font-size="24.71" style="fill:#dcdcdc;font-family:'Liberation Sans'">Options</text>
<text transform="translate(624.06 502.40) scale(0.9432 1)" font-size="24.71" style="fill:#dcdcdc;font-family:'Liberation Sans'">Sync</text>
<text transform="translate(747.50 502.40) scale(0.9651 1)" font-size="24.71" style="fill:#fff;font-family:'Liberation Sans'">TII</text>
<text transform="translate(847.00 502.40) scale(1.0575 1)" font-size="24.71" style="fill:#dcdcdc;font-family:'Liberation Sans'">Audio</text>
<text transform="translate(598.53 603.90) scale(0.9683 1)" font-size="22.89" style="fill:#fff;font-family:'Liberation Sans'">Pattern</text>
<text transform="translate(699.50 603.90) scale(1.0009 1)" font-size="22.89" style="fill:#fff;font-family:'Liberation Sans'">MainId</text>
<text transform="translate(798.29 603.90) scale(0.9603 1)" font-size="22.89" style="fill:#fff;font-family:'Liberation Sans'">SubId</text>
<svg x="0" y="0" width="937" height="912" overflow="hidden"><text transform="translate(885.29 603.90) scale(0.9646 1)" font-size="22.89" style="fill:#fff;font-family:'Liberation Sans'">Strength</text></svg>
<text transform="translate(1260.38 433.10) scale(0.9203 1)" font-size="23.20" style="fill:#fff;font-family:'Liberation Sans'">Channel Impulse Response (CIR)</text>
<text transform="translate(591.10 57.00) scale(0.9024 1)" font-size="18.17" style="fill:#fff;font-family:'Liberation Sans'">Freeze</text>
<text transform="translate(698.00 57.00) scale(0.9771 1)" font-size="18.17" style="fill:#fff;font-family:'Liberation Sans'">Gradient</text>
<text transform="translate(573.00 119.50) scale(0.9872 1)" font-size="18.17" style="fill:#fff;font-family:'Liberation Sans'">Smoothing Level</text>
<text transform="translate(573.00 215.00) scale(0.9771 1)" font-size="18.17" style="fill:#fff;font-family:'Liberation Sans'">Zoom X</text>
<text transform="translate(573.00 305.00) scale(0.9613 1)" font-size="18.17" style="fill:#fff;font-family:'Liberation Sans'">Zoom Y</text>
<text transform="translate(985.35 475.90) scale(0.9024 1)" font-size="18.17" style="fill:#fff;font-family:'Liberation Sans'">Freeze</text>
<text transform="translate(1093.00 475.90) scale(0.9699 1)" font-size="18.17" style="fill:#fff;font-family:'Liberation Sans'">Gradient</text>
<text transform="translate(967.50 537.00) scale(0.9872 1)" font-size="18.17" style="fill:#fff;font-family:'Liberation Sans'">Smoothing Level</text>
<text transform="translate(967.50 618.00) scale(0.9771 1)" font-size="18.17" style="fill:#fff;font-family:'Liberation Sans'">Zoom X</text>
<text transform="translate(967.50 693.00) scale(0.9613 1)" font-size="18.17" style="fill:#fff;font-family:'Liberation Sans'">Zoom Y</text>
<text transform="translate(967.50 768.00) scale(0.9423 1)" font-size="18.17" style="fill:#fff;font-family:'Liberation Sans'">x-Axis</text>
<text transform="translate(1003.90 797.70) scale(0.9269 1)" font-size="18.17" style="fill:#fff;font-family:'Liberation Sans'">Samples</text>
<text transform="translate(1002.94 827.70) scale(0.9606 1)" font-size="18.17" style="fill:#fff;font-family:'Liberation Sans'">Distance</text>
<text transform="translate(1004.50 857.60) scale(0.9425 1)" font-size="18.17" style="fill:#fff;font-family:'Liberation Sans'">Time</text>
<text transform="translate(520.80 504.00) scale(0.8600 1)" font-size="19.80" style="fill:#fff;font-family:'Liberation Serif'">0</text>
<text transform="translate(520.80 550.20) scale(0.8600 1)" font-size="19.80" style="fill:#fff;font-family:'Liberation Serif'">0</text>
<text transform="translate(520.80 688.80) scale(0.8600 1)" font-size="19.80" style="fill:#fff;font-family:'Liberation Serif'">0</text>
<text transform="translate(520.80 735.00) scale(0.8600 1)" font-size="19.80" style="fill:#fff;font-family:'Liberation Serif'">0</text>
<text transform="translate(17.03 93.80) scale(0.8852 1)" font-size="55.20" style="fill:#ffff2a;font-family:'Liberation Sans'" stroke="#ffff2a" stroke-width="0.6">0</text>
<text transform="translate(69.65 93.80) scale(0.9521 1)" font-size="55.20" style="fill:#ffff2a;font-family:'Liberation Sans'" stroke="#ffff2a" stroke-width="0.6">208</text>
<text transform="translate(183.38 93.80) scale(0.9621 1)" font-size="55.20" style="fill:#ffff2a;font-family:'Liberation Sans'" stroke="#ffff2a" stroke-width="0.6">064</text>
<text transform="translate(297.14 93.80) scale(0.9798 1)" font-size="55.20" style="fill:#ffff2a;font-family:'Liberation Sans'" stroke="#ffff2a" stroke-width="0.6">000</text>
<text transform="translate(396.95 93.00) scale(0.9380 1)" font-size="53.60" style="fill:#ffff2a;font-family:'Liberation Sans'" stroke="#ffff2a" stroke-width="0.6">Hz</text>
</svg>
</body></html>
